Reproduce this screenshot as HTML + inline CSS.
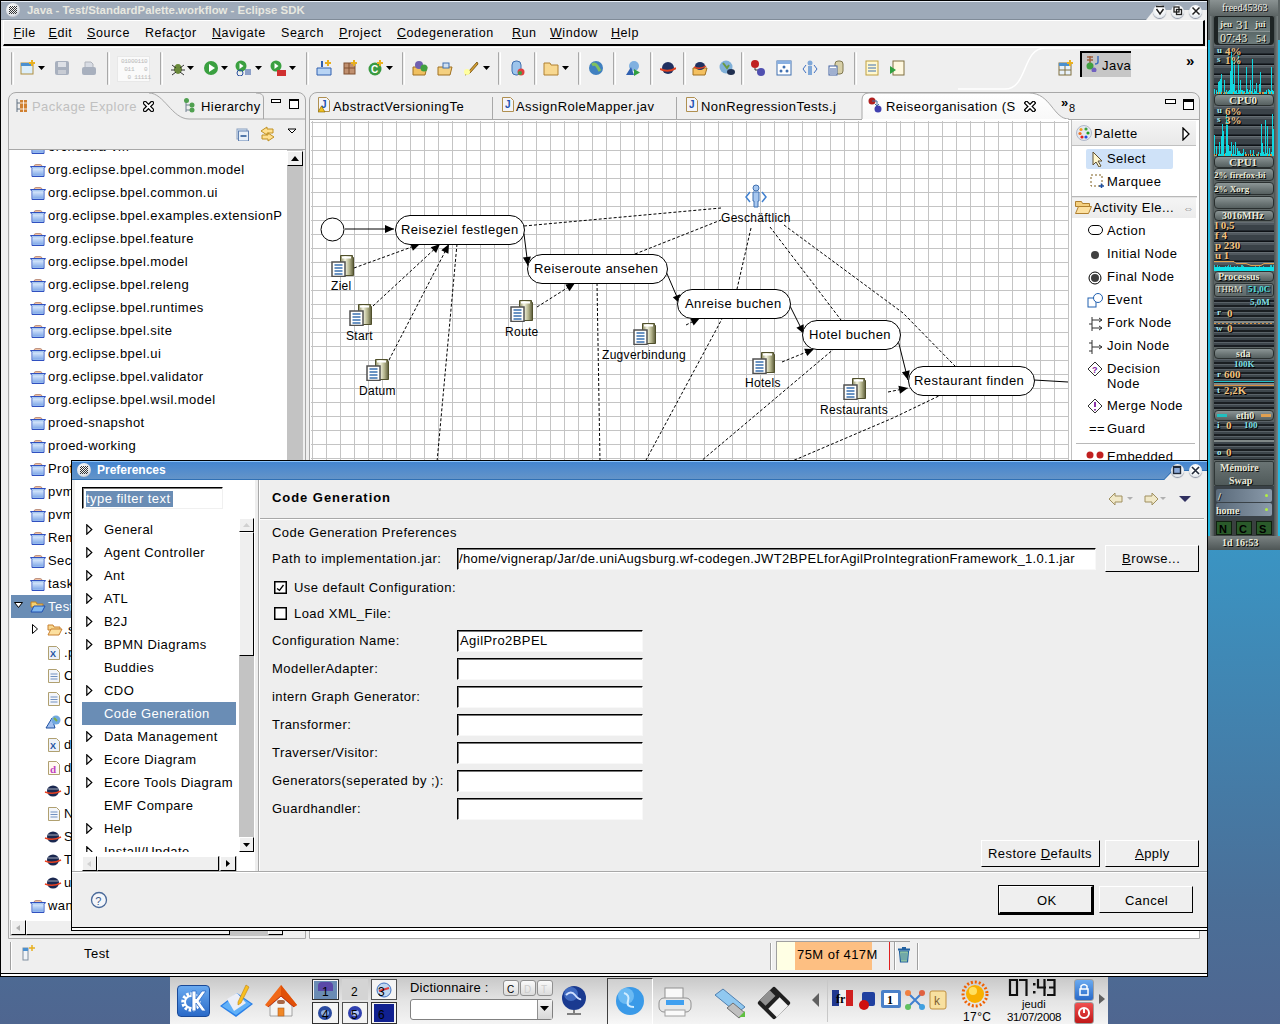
<!DOCTYPE html>
<html><head><meta charset="utf-8"><style>
html,body{margin:0;padding:0;width:1280px;height:1024px;overflow:hidden;position:relative;font-family:'Liberation Sans',sans-serif}
.r{position:absolute;box-sizing:border-box}
.t{position:absolute;white-space:pre}
</style></head><body>
<div class="r" style="left:0px;top:0px;width:1280px;height:1024px;background:linear-gradient(#3a9ad0 0px,#3a95c4 540px,#4a6f98 900px,#4f6690 1024px)"></div>
<div class="r" style="left:0px;top:0px;width:1208px;height:977px;background:#000"></div>
<div class="r" style="left:1px;top:1px;width:1206px;height:975px;background:#efefef"></div>
<div class="r" style="left:1px;top:1px;width:1206px;height:19px;background:#9eaab9;border-bottom:1px solid #808b98"></div>
<div class="r" style="left:1px;top:1px;width:1206px;height:1px;background:#e8eff8"></div>
<div class="r" style="left:1146px;top:10px;width:61px;height:10px;background:#efefef;clip-path:polygon(0 10px,61px 10px,61px 0,8px 0)"></div>
<div class="r" style="left:1153.0px;top:4.5px;width:13px;height:13px;border-radius:50%;background:radial-gradient(circle at 50% 40%,#fff 30%,#e8ecf0 65%,#b8c0cc);box-shadow:0 1px 1px #8890a0"></div>
<div class="r" style="left:1171.0px;top:4.5px;width:13px;height:13px;border-radius:50%;background:radial-gradient(circle at 50% 40%,#fff 30%,#e8ecf0 65%,#b8c0cc);box-shadow:0 1px 1px #8890a0"></div>
<div class="r" style="left:1189.0px;top:4.5px;width:13px;height:13px;border-radius:50%;background:radial-gradient(circle at 50% 40%,#fff 30%,#e8ecf0 65%,#b8c0cc);box-shadow:0 1px 1px #8890a0"></div>
<svg class="r" style="left:1154px;top:5px" width="12" height="12" viewBox="0 0 12 12"><path d="M2 1.5h8M2.5 4l3.5 5 3.5-5" stroke="#202020" stroke-width="1.5" fill="none"/></svg>
<svg class="r" style="left:1172px;top:5px" width="12" height="12" viewBox="0 0 12 12"><rect x="2" y="2" width="5" height="5" fill="none" stroke="#202020" stroke-width="1.3"/><rect x="4.5" y="4.5" width="5" height="5" fill="none" stroke="#202020" stroke-width="1.3"/></svg>
<svg class="r" style="left:1190px;top:5px" width="12" height="12" viewBox="0 0 12 12"><path d="M2.5 2.5l7 7M9.5 2.5l-7 7" stroke="#202020" stroke-width="1.5"/></svg>
<div class="r" style="left:6px;top:3px;width:14px;height:14px;border-radius:50%;background:radial-gradient(circle at 40% 35%,#fff,#dde1e6 60%,#99a);"></div>
<div class="r" style="left:9px;top:6px;width:8px;height:8px;background:repeating-conic-gradient(#333 0 25%,transparent 0 50%) 0 0/2px 2px"></div>
<div class="t" style="left:27px;top:2.55px;font-size:11.4px;line-height:14px;letter-spacing:0px;color:#e8e8e0;font-weight:bold;font-family:'Liberation Sans',sans-serif;">Java - Test/StandardPalette.workflow - Eclipse SDK</div>
<div class="r" style="left:3px;top:20px;width:1202px;height:26px;background:#efefef;border-top:1px solid #fff;border-left:1px solid #fff;border-bottom:2px solid #000;border-right:2px solid #000"></div>
<div class="t" style="left:13.5px;top:26.17px;font-size:12.5px;line-height:15px;letter-spacing:0.55px;color:#000;font-weight:normal;font-family:'Liberation Sans',sans-serif;"><u>F</u>ile</div>
<div class="t" style="left:48.5px;top:26.17px;font-size:12.5px;line-height:15px;letter-spacing:0.55px;color:#000;font-weight:normal;font-family:'Liberation Sans',sans-serif;"><u>E</u>dit</div>
<div class="t" style="left:87px;top:26.17px;font-size:12.5px;line-height:15px;letter-spacing:0.55px;color:#000;font-weight:normal;font-family:'Liberation Sans',sans-serif;"><u>S</u>ource</div>
<div class="t" style="left:145px;top:26.17px;font-size:12.5px;line-height:15px;letter-spacing:0.55px;color:#000;font-weight:normal;font-family:'Liberation Sans',sans-serif;">Refac<u>t</u>or</div>
<div class="t" style="left:212px;top:26.17px;font-size:12.5px;line-height:15px;letter-spacing:0.55px;color:#000;font-weight:normal;font-family:'Liberation Sans',sans-serif;"><u>N</u>avigate</div>
<div class="t" style="left:281px;top:26.17px;font-size:12.5px;line-height:15px;letter-spacing:0.55px;color:#000;font-weight:normal;font-family:'Liberation Sans',sans-serif;">Se<u>a</u>rch</div>
<div class="t" style="left:339px;top:26.17px;font-size:12.5px;line-height:15px;letter-spacing:0.55px;color:#000;font-weight:normal;font-family:'Liberation Sans',sans-serif;"><u>P</u>roject</div>
<div class="t" style="left:397px;top:26.17px;font-size:12.5px;line-height:15px;letter-spacing:0.55px;color:#000;font-weight:normal;font-family:'Liberation Sans',sans-serif;"><u>C</u>odegeneration</div>
<div class="t" style="left:512px;top:26.17px;font-size:12.5px;line-height:15px;letter-spacing:0.55px;color:#000;font-weight:normal;font-family:'Liberation Sans',sans-serif;"><u>R</u>un</div>
<div class="t" style="left:550px;top:26.17px;font-size:12.5px;line-height:15px;letter-spacing:0.55px;color:#000;font-weight:normal;font-family:'Liberation Sans',sans-serif;"><u>W</u>indow</div>
<div class="t" style="left:611px;top:26.17px;font-size:12.5px;line-height:15px;letter-spacing:0.55px;color:#000;font-weight:normal;font-family:'Liberation Sans',sans-serif;"><u>H</u>elp</div>
<div class="r" style="left:1px;top:47px;width:1206px;height:1px;background:#fff"></div>
<div class="r" style="left:11px;top:52px;width:3px;height:33px;border-left:1.5px solid #a8a8a8;border-right:1.5px solid #fff;border-radius:1px"></div>
<div class="r" style="left:107px;top:52px;width:3px;height:33px;border-left:1.5px solid #a8a8a8;border-right:1.5px solid #fff;border-radius:1px"></div>
<div class="r" style="left:160px;top:52px;width:3px;height:33px;border-left:1.5px solid #a8a8a8;border-right:1.5px solid #fff;border-radius:1px"></div>
<div class="r" style="left:306px;top:52px;width:3px;height:33px;border-left:1.5px solid #a8a8a8;border-right:1.5px solid #fff;border-radius:1px"></div>
<div class="r" style="left:402px;top:52px;width:3px;height:33px;border-left:1.5px solid #a8a8a8;border-right:1.5px solid #fff;border-radius:1px"></div>
<div class="r" style="left:498px;top:52px;width:3px;height:33px;border-left:1.5px solid #a8a8a8;border-right:1.5px solid #fff;border-radius:1px"></div>
<div class="r" style="left:534px;top:52px;width:3px;height:33px;border-left:1.5px solid #a8a8a8;border-right:1.5px solid #fff;border-radius:1px"></div>
<div class="r" style="left:578px;top:52px;width:3px;height:33px;border-left:1.5px solid #a8a8a8;border-right:1.5px solid #fff;border-radius:1px"></div>
<div class="r" style="left:613px;top:52px;width:3px;height:33px;border-left:1.5px solid #a8a8a8;border-right:1.5px solid #fff;border-radius:1px"></div>
<div class="r" style="left:650px;top:52px;width:3px;height:33px;border-left:1.5px solid #a8a8a8;border-right:1.5px solid #fff;border-radius:1px"></div>
<div class="r" style="left:683px;top:52px;width:3px;height:33px;border-left:1.5px solid #a8a8a8;border-right:1.5px solid #fff;border-radius:1px"></div>
<div class="r" style="left:741px;top:52px;width:3px;height:33px;border-left:1.5px solid #a8a8a8;border-right:1.5px solid #fff;border-radius:1px"></div>
<div class="r" style="left:854px;top:52px;width:3px;height:33px;border-left:1.5px solid #a8a8a8;border-right:1.5px solid #fff;border-radius:1px"></div>
<svg class="r" style="left:20px;top:60px" width="16" height="16" viewBox="0 0 16 16"><rect x="1" y="3" width="12" height="11" fill="#dceefa" stroke="#b09040"/><rect x="1" y="3" width="12" height="3" fill="#4a90d0"/><path d="M12 0v6M9 3h6" stroke="#e8b020" stroke-width="2"/></svg>
<svg class="r" style="left:38px;top:66px" width="7" height="4" viewBox="0 0 7 4"><path d="M0 0H7L3.5 4Z" fill="#000"/></svg>
<svg class="r" style="left:54px;top:60px" width="16" height="16" viewBox="0 0 16 16"><rect x="1" y="1" width="14" height="14" rx="2" fill="#a8b0be"/><rect x="4" y="2" width="8" height="5" fill="#dde0e6"/><rect x="4" y="10" width="8" height="4" fill="#c8ccd4"/></svg>
<svg class="r" style="left:81px;top:60px" width="16" height="16" viewBox="0 0 16 16"><rect x="1" y="7" width="14" height="8" rx="2" fill="#a8b0be"/><path d="M4 7V2h6l2 2v3" fill="#d8dce4" stroke="#b0b4bc"/></svg>
<div class="r" style="left:117px;top:56px;width:33px;height:26px;background:#fafafa;border:1px solid #e8e8e8"></div>
<div class="t" style="left:121px;top:58px;font:6px/8px 'Liberation Mono',monospace;color:#b8b8b8;letter-spacing:-.3px">01000110
 011   0
  0 11111</div>
<svg class="r" style="left:170px;top:60px" width="16" height="16" viewBox="0 0 16 16"><ellipse cx="8" cy="9" rx="4" ry="5" fill="#6a8a3a"/><path d="M2 5l4 3M14 5l-4 3M1 10h4M15 10h-4M2 15l4-3M14 15l-4-3" stroke="#333"/></svg>
<svg class="r" style="left:187px;top:66px" width="7" height="4" viewBox="0 0 7 4"><path d="M0 0H7L3.5 4Z" fill="#000"/></svg>
<svg class="r" style="left:203px;top:60px" width="16" height="16" viewBox="0 0 16 16"><circle cx="8" cy="8" r="7" fill="#3aa040"/><path d="M6 4v8l6-4z" fill="#fff"/></svg>
<svg class="r" style="left:221px;top:66px" width="7" height="4" viewBox="0 0 7 4"><path d="M0 0H7L3.5 4Z" fill="#000"/></svg>
<svg class="r" style="left:235px;top:60px" width="16" height="16" viewBox="0 0 16 16"><circle cx="6" cy="6" r="5.5" fill="#3aa040"/><path d="M4.5 3v6l4-3z" fill="#fff"/><circle cx="5" cy="13" r="3" fill="none" stroke="#2a50a0"/><path d="M10 10h6M10 12h6M10 14h6" stroke="#2a50a0"/></svg>
<svg class="r" style="left:255px;top:66px" width="7" height="4" viewBox="0 0 7 4"><path d="M0 0H7L3.5 4Z" fill="#000"/></svg>
<svg class="r" style="left:270px;top:60px" width="16" height="16" viewBox="0 0 16 16"><circle cx="6" cy="6" r="5.5" fill="#3aa040"/><path d="M4.5 3v6l4-3z" fill="#fff"/><rect x="7" y="10" width="9" height="6" fill="#d03030"/></svg>
<svg class="r" style="left:289px;top:66px" width="7" height="4" viewBox="0 0 7 4"><path d="M0 0H7L3.5 4Z" fill="#000"/></svg>
<svg class="r" style="left:316px;top:60px" width="16" height="16" viewBox="0 0 16 16"><path d="M1 8h14v7H1z" fill="#b8d4f4" stroke="#3060b0"/><path d="M6 1v6" stroke="#3060b0" stroke-width="2"/><path d="M12 0v6M9 3h6" stroke="#e8b020" stroke-width="2"/></svg>
<svg class="r" style="left:342px;top:60px" width="16" height="16" viewBox="0 0 16 16"><rect x="2" y="3" width="11" height="11" fill="#c09070" stroke="#805030"/><path d="M7 3v11M2 8h11" stroke="#805030"/><path d="M12 0v6M9 3h6" stroke="#e8b020" stroke-width="2"/></svg>
<svg class="r" style="left:368px;top:60px" width="16" height="16" viewBox="0 0 16 16"><circle cx="7" cy="9" r="6.5" fill="#3a9a40"/><text x="3" y="13" font-size="10" font-weight="bold" fill="#fff" font-family="Liberation Sans">C</text><path d="M12 0v6M9 3h6" stroke="#e8b020" stroke-width="2"/></svg>
<svg class="r" style="left:386px;top:66px" width="7" height="4" viewBox="0 0 7 4"><path d="M0 0H7L3.5 4Z" fill="#000"/></svg>
<svg class="r" style="left:412px;top:60px" width="16" height="16" viewBox="0 0 16 16"><path d="M1 7h14l-2 8H1z" fill="#f0c060" stroke="#a07020"/><circle cx="7" cy="5" r="4" fill="#7060b0"/><circle cx="12" cy="8" r="3.5" fill="#40a040"/></svg>
<svg class="r" style="left:437px;top:60px" width="16" height="16" viewBox="0 0 16 16"><path d="M1 7h14l-2 8H1z" fill="#f4d080" stroke="#a07020"/><rect x="6" y="3" width="6" height="5" fill="#d0e0f0" stroke="#4070b0"/></svg>
<svg class="r" style="left:463px;top:60px" width="16" height="16" viewBox="0 0 16 16"><path d="M2 15l4-4 8-9 1 2-8 9z" fill="#d8a030" stroke="#806020"/><circle cx="4" cy="12" r="3" fill="#ffffa0"/></svg>
<svg class="r" style="left:483px;top:66px" width="7" height="4" viewBox="0 0 7 4"><path d="M0 0H7L3.5 4Z" fill="#000"/></svg>
<svg class="r" style="left:509px;top:60px" width="16" height="16" viewBox="0 0 16 16"><rect x="3" y="1" width="9" height="14" rx="4" fill="#9cc4ec" stroke="#4070b0"/><circle cx="12" cy="12" r="3.5" fill="#e04040"/><circle cx="11" cy="13" r="2" fill="#40a040"/></svg>
<svg class="r" style="left:543px;top:60px" width="16" height="16" viewBox="0 0 16 16"><path d="M1 3h6l1 2h7v10H1z" fill="#f8d890" stroke="#b08030"/></svg>
<svg class="r" style="left:562px;top:66px" width="7" height="4" viewBox="0 0 7 4"><path d="M0 0H7L3.5 4Z" fill="#000"/></svg>
<svg class="r" style="left:588px;top:60px" width="16" height="16" viewBox="0 0 16 16"><circle cx="8" cy="8" r="7" fill="#4080c0"/><path d="M4 5q3-2 5 1t3 5" stroke="#80c060" stroke-width="3" fill="none"/></svg>
<svg class="r" style="left:625px;top:60px" width="16" height="16" viewBox="0 0 16 16"><circle cx="9" cy="6" r="5" fill="#80b0e0"/><path d="M1 15l5-8 3 8z" fill="#3060b0"/><path d="M9 9v7l6-3.5z" fill="#30a040"/></svg>
<svg class="r" style="left:660px;top:60px" width="16" height="16" viewBox="0 0 16 16"><ellipse cx="8" cy="8" rx="6" ry="6" fill="#203060"/><path d="M0 9q8 4 16-1" stroke="#e04020" stroke-width="2" fill="none"/></svg>
<svg class="r" style="left:692px;top:60px" width="16" height="16" viewBox="0 0 16 16"><path d="M1 8h14l-2 7H1z" fill="#f4c060" stroke="#a07020"/><ellipse cx="8" cy="6" rx="5" ry="4" fill="#203060"/><path d="M2 7q6 3 12-1" stroke="#e04020" stroke-width="1.5" fill="none"/></svg>
<svg class="r" style="left:719px;top:60px" width="16" height="16" viewBox="0 0 16 16"><circle cx="7" cy="7" r="6.5" fill="#80b0d8"/><path d="M4 3l4 5 2-3" stroke="#6a9a40" stroke-width="2" fill="none"/><ellipse cx="12" cy="12" rx="4" ry="3" fill="#203050"/></svg>
<svg class="r" style="left:750px;top:60px" width="16" height="16" viewBox="0 0 16 16"><circle cx="5" cy="4" r="4" fill="#c02020"/><path d="M5 8v2h6v2" stroke="#333" fill="none"/><circle cx="11" cy="12" r="4" fill="#5050b0"/></svg>
<svg class="r" style="left:776px;top:60px" width="16" height="16" viewBox="0 0 16 16"><rect x="1" y="1" width="14" height="14" fill="#fff" stroke="#4070b0"/><rect x="1" y="1" width="14" height="3" fill="#8ab0e0"/><circle cx="5" cy="11" r="1.5" fill="#4070b0"/><circle cx="11" cy="11" r="1.5" fill="#4070b0"/><circle cx="8" cy="7" r="1.5" fill="#4070b0"/></svg>
<svg class="r" style="left:802px;top:60px" width="16" height="16" viewBox="0 0 16 16"><circle cx="8" cy="3" r="2.5" fill="#80a8d8"/><rect x="6" y="6" width="4" height="9" fill="#80a8d8"/><path d="M4 5l-3 4 3 4M12 5l3 4-3 4" stroke="#4070c0" fill="none"/></svg>
<svg class="r" style="left:828px;top:60px" width="16" height="16" viewBox="0 0 16 16"><rect x="7" y="1" width="8" height="13" rx="3" fill="#d8d0a8" stroke="#807850"/><rect x="1" y="6" width="8" height="9" fill="#fff" stroke="#4060a0"/><path d="M2 9h6M2 11h6M2 13h6" stroke="#4060a0"/></svg>
<svg class="r" style="left:864px;top:60px" width="16" height="16" viewBox="0 0 16 16"><rect x="2" y="1" width="12" height="14" fill="#fff8d0" stroke="#c0a040"/><path d="M4 5h8M4 8h8M4 11h8" stroke="#4070b0"/></svg>
<svg class="r" style="left:889px;top:60px" width="16" height="16" viewBox="0 0 16 16"><rect x="4" y="1" width="11" height="14" fill="#fff8e0" stroke="#807040"/><path d="M1 6v8l6-4z" fill="#30a040"/></svg>
<div class="r" style="left:1020px;top:48px;width:187px;height:44px;background:#efefef"></div>
<svg class="r" style="left:900px;top:40px" width="307" height="54"><path d="M58 49 H105 C128 49 122 8 145 8 H307" stroke="#fff" stroke-width="1.5" fill="none"/></svg>
<svg class="r" style="left:1058px;top:60px" width="16" height="16" viewBox="0 0 16 16"><rect x="1" y="3" width="12" height="12" fill="#e8f2fc" stroke="#807040"/><rect x="1" y="3" width="12" height="3" fill="#4a90d0"/><path d="M7 6v9M1 10h12" stroke="#807040"/><path d="M12 0v6M9 3h6" stroke="#e8b020" stroke-width="2"/></svg>
<div class="r" style="left:1080px;top:51px;width:51px;height:26px;background:#c6c6c6;border-top:2px solid #000;border-left:2px solid #000"></div>
<svg class="r" style="left:1085px;top:56px" width="16" height="16" viewBox="0 0 16 16"><path d="M2 1h6M5 0v7M2 4h6" stroke="#a06040" stroke-width="1.5"/><circle cx="5" cy="10" r="3.5" fill="#40a040"/><circle cx="9" cy="14" r="2.5" fill="#7060c0"/><path d="M13 0v6q0 2-3 2" stroke="#4070c0" stroke-width="1.5" fill="none"/></svg>
<div class="t" style="left:1102px;top:57.50px;font-size:13px;line-height:16px;letter-spacing:0.45px;color:#000;font-weight:normal;font-family:'Liberation Sans',sans-serif;">Java</div>
<div class="t" style="left:1186px;top:51.80px;font-size:15px;line-height:18px;letter-spacing:0px;color:#000;font-weight:bold;font-family:'Liberation Sans',sans-serif;">»</div>
<div class="r" style="left:1px;top:973px;width:1206px;height:1px;background:#000"></div>
<div class="r" style="left:1px;top:974px;width:1206px;height:2px;background:#fff"></div>
<div class="r" style="left:1px;top:976px;width:1206px;height:1px;background:#000"></div>
<div class="r" style="left:10px;top:942px;width:2px;height:28px;border-left:1px solid #a0a0a0;border-right:1px solid #fff"></div>
<svg class="r" style="left:20px;top:945px" width="16" height="16" viewBox="0 0 16 16"><rect x="3" y="3" width="5" height="12" fill="#f0f4f8" stroke="#8090a0"/><rect x="3" y="3" width="5" height="3" fill="#4a90d0"/><path d="M12 0v6M9 3h6" stroke="#e8b020" stroke-width="1.5"/></svg>
<div class="t" style="left:84px;top:945.50px;font-size:13px;line-height:16px;letter-spacing:0.45px;color:#000;font-weight:normal;font-family:'Liberation Sans',sans-serif;">Test</div>
<div class="r" style="left:776px;top:941px;width:134px;height:29px;background:#eee;border-top:1px solid #a0a0a0;border-left:1px solid #a0a0a0"></div>
<div class="r" style="left:777px;top:942px;width:18px;height:28px;background:#ffffe4"></div>
<div class="r" style="left:795px;top:942px;width:77px;height:28px;background:#fdbf82"></div>
<div class="r" style="left:889px;top:942px;width:1px;height:28px;background:#e02020"></div>
<div class="r" style="left:894px;top:942px;width:2px;height:28px;border-left:1px solid #a0a0a0;border-right:1px solid #fff"></div>
<div class="t" style="left:797px;top:946.50px;font-size:13px;line-height:16px;letter-spacing:0.45px;color:#000;font-weight:normal;font-family:'Liberation Sans',sans-serif;">75M of 417M</div>
<svg class="r" style="left:897px;top:946px" width="14" height="17" viewBox="0 0 14 17"><path d="M1 3.5h12" stroke="#2060a0" stroke-width="2"/><rect x="5" y="1" width="4" height="2" fill="#2060a0"/><path d="M2.5 5h9l-1 11h-7z" fill="#a8d8a0" stroke="#2060a0" stroke-width="1.2"/><path d="M5 6.5v8M7 6.5v8M9 6.5v8" stroke="#3a78b0" stroke-width="1"/></svg>
<div class="r" style="left:917px;top:943px;width:2px;height:27px;border-left:1px solid #a0a0a0;border-right:1px solid #fff"></div>
<div class="r" style="left:770px;top:943px;width:2px;height:27px;border-left:1px solid #a0a0a0;border-right:1px solid #fff"></div>
<div class="r" style="left:8px;top:92px;width:298px;height:847px;border:1px solid #a8a8a8;border-radius:8px 8px 0 0;background:#efefef"></div>
<svg class="r" style="left:8px;top:92px" width="298" height="58" viewBox="0 0 298 58"><path d="M141 1 C156 1 164 27 181 27 H297" stroke="#a8a8a8" fill="none"/><path d="M186 27 L255 27 Q263 27 263 35" fill="none"/><path d="M255.5 27 V6 Q255.5 1 248 1" stroke="#a8a8a8" fill="none"/></svg>
<div class="r" style="left:9px;top:149px;width:296px;height:1px;background:#a8a8a8"></div>
<svg class="r" style="left:16px;top:99px" width="12" height="13" viewBox="0 0 12 13"><path d="M1 0v13M1 4h3M1 10h3" stroke="#607080"/><rect x="4" y="1" width="7" height="6" fill="#d08030"/><rect x="4" y="7" width="7" height="6" fill="#d08030"/><path d="M7.5 1v12M4 4h7M4 10h7" stroke="#fff" stroke-width=".8"/></svg>
<div class="t" style="left:32px;top:98.50px;font-size:13px;line-height:16px;letter-spacing:0.45px;color:#c0c0c0;font-weight:normal;font-family:'Liberation Sans',sans-serif;">Package Explore</div>
<svg class="r" style="left:143px;top:101px" width="11" height="11" viewBox="0 0 11 11"><path d="M2 2l7 7M9 2l-7 7" stroke="#000" stroke-width="4.4" stroke-linecap="square"/><path d="M2 2l7 7M9 2l-7 7" stroke="#fff" stroke-width="1.8" stroke-linecap="square"/></svg>
<svg class="r" style="left:184px;top:98px" width="12" height="15" viewBox="0 0 12 15"><path d="M2 3v11M2 7h5M2 12h5" stroke="#708090"/><circle cx="2.5" cy="2.5" r="2.5" fill="#50a050"/><circle cx="8" cy="7" r="2.5" fill="#50a050"/><circle cx="8" cy="12" r="2.5" fill="#50a050"/></svg>
<div class="t" style="left:201px;top:98.50px;font-size:13px;line-height:16px;letter-spacing:0.45px;color:#000;font-weight:normal;font-family:'Liberation Sans',sans-serif;">Hierarchy</div>
<div class="r" style="left:271px;top:99px;width:10px;height:4px;border:1px solid #000;background:#fff"></div>
<div class="r" style="left:289px;top:99px;width:10px;height:10px;border:1px solid #000;border-top-width:2px;background:#fff"></div>
<svg class="r" style="left:236px;top:128px" width="13" height="13" viewBox="0 0 13 13"><rect x="1" y="1" width="10" height="10" fill="#e0ecf8" stroke="#8aa0c0"/><rect x="2.5" y="3" width="10" height="10" fill="#e8f0f8" stroke="#6080b0"/><path d="M4.5 8h6" stroke="#205090" stroke-width="1.5"/></svg>
<svg class="r" style="left:259px;top:126px" width="17" height="16" viewBox="0 0 17 16"><path d="M8 1L2 5l6 4V7h6V3H8z" fill="#ffe090" stroke="#c09020"/><path d="M9 15l6-4-6-4v2H3v4h6z" fill="#ffe090" stroke="#c09020"/></svg>
<svg class="r" style="left:287px;top:128px" width="10" height="6" viewBox="0 0 10 6"><path d="M1 1h8L5 5z" fill="#fff" stroke="#000"/></svg>
<div class="r" style="left:10px;top:150px;width:277px;height:770px;background:#fff"></div>
<div class="r" style="left:287px;top:150px;width:16px;height:770px;background:#c3c3c3"></div>
<div class="r" style="left:287px;top:151px;width:16px;height:15px;background:#efefef;border-top:1px solid #fff;border-left:1px solid #fff;border-right:1px solid #000;border-bottom:1px solid #000;box-sizing:border-box;"></div>
<svg class="r" style="left:290px;top:155px" width="10" height="7" viewBox="0 0 10 7"><path d="M1 6h8L5 1z" fill="#000"/></svg>
<div class="r" style="left:10px;top:920px;width:277px;height:16px;background:#c3c3c3"></div>
<div class="r" style="left:11px;top:920px;width:15px;height:15px;background:#efefef;border-top:1px solid #fff;border-left:1px solid #fff;border-right:1px solid #000;border-bottom:1px solid #000;box-sizing:border-box;"></div>
<div class="r" style="left:26px;top:920px;width:204px;height:15px;background:#efefef;border-top:1px solid #fff;border-left:1px solid #fff;border-right:1px solid #000;border-bottom:1px solid #000;box-sizing:border-box;"></div>
<div class="r" style="left:268px;top:920px;width:15px;height:15px;background:#efefef;border-top:1px solid #fff;border-left:1px solid #fff;border-right:1px solid #000;border-bottom:1px solid #000;box-sizing:border-box;"></div>
<svg class="r" style="left:14px;top:924px" width="8" height="8" viewBox="0 0 8 8"><path d="M6 1v6L2 4z" fill="#b0b0b0"/></svg>
<div class="r" style="left:283px;top:920px;width:20px;height:18px;background:#efefef"></div>
<svg width="0" height="0" style="position:absolute"><defs><linearGradient id="fg" x1="0" y1="0" x2="0" y2="1"><stop offset="0" stop-color="#d8e8fc"/><stop offset="1" stop-color="#80a8e8"/></linearGradient></defs></svg>
<div class="r" style="left:10px;top:150px;width:277px;height:770px;overflow:hidden">
<svg class="r" style="left:20px;top:-9px" width="16" height="13" viewBox="0 0 16 13"><path d="M4 2.5q0-2 2-2h4q2 0 2 2" fill="#f0c0a0" stroke="#b08070" stroke-width=".8"/><path d="M0.5 2.5h15l-1.5 2v8h-12v-8z" fill="#a8c8f0" stroke="#3050c0"/><path d="M2.5 4.5h11v7h-11z" fill="url(#fg)"/></svg>
<div class="t" style="left:38px;top:-11.50px;font-size:13px;line-height:16px;letter-spacing:0.45px;color:#000;font-weight:normal;font-family:'Liberation Sans',sans-serif;">orchestra-vm</div>
<svg class="r" style="left:20px;top:14px" width="16" height="13" viewBox="0 0 16 13"><path d="M4 2.5q0-2 2-2h4q2 0 2 2" fill="#f0c0a0" stroke="#b08070" stroke-width=".8"/><path d="M0.5 2.5h15l-1.5 2v8h-12v-8z" fill="#a8c8f0" stroke="#3050c0"/><path d="M2.5 4.5h11v7h-11z" fill="url(#fg)"/></svg>
<div class="t" style="left:38px;top:11.50px;font-size:13px;line-height:16px;letter-spacing:0.45px;color:#000;font-weight:normal;font-family:'Liberation Sans',sans-serif;">org.eclipse.bpel.common.model</div>
<svg class="r" style="left:20px;top:37px" width="16" height="13" viewBox="0 0 16 13"><path d="M4 2.5q0-2 2-2h4q2 0 2 2" fill="#f0c0a0" stroke="#b08070" stroke-width=".8"/><path d="M0.5 2.5h15l-1.5 2v8h-12v-8z" fill="#a8c8f0" stroke="#3050c0"/><path d="M2.5 4.5h11v7h-11z" fill="url(#fg)"/></svg>
<div class="t" style="left:38px;top:34.50px;font-size:13px;line-height:16px;letter-spacing:0.45px;color:#000;font-weight:normal;font-family:'Liberation Sans',sans-serif;">org.eclipse.bpel.common.ui</div>
<svg class="r" style="left:20px;top:60px" width="16" height="13" viewBox="0 0 16 13"><path d="M4 2.5q0-2 2-2h4q2 0 2 2" fill="#f0c0a0" stroke="#b08070" stroke-width=".8"/><path d="M0.5 2.5h15l-1.5 2v8h-12v-8z" fill="#a8c8f0" stroke="#3050c0"/><path d="M2.5 4.5h11v7h-11z" fill="url(#fg)"/></svg>
<div class="t" style="left:38px;top:57.50px;font-size:13px;line-height:16px;letter-spacing:0.45px;color:#000;font-weight:normal;font-family:'Liberation Sans',sans-serif;">org.eclipse.bpel.examples.extensionP</div>
<svg class="r" style="left:20px;top:83px" width="16" height="13" viewBox="0 0 16 13"><path d="M4 2.5q0-2 2-2h4q2 0 2 2" fill="#f0c0a0" stroke="#b08070" stroke-width=".8"/><path d="M0.5 2.5h15l-1.5 2v8h-12v-8z" fill="#a8c8f0" stroke="#3050c0"/><path d="M2.5 4.5h11v7h-11z" fill="url(#fg)"/></svg>
<div class="t" style="left:38px;top:80.50px;font-size:13px;line-height:16px;letter-spacing:0.45px;color:#000;font-weight:normal;font-family:'Liberation Sans',sans-serif;">org.eclipse.bpel.feature</div>
<svg class="r" style="left:20px;top:106px" width="16" height="13" viewBox="0 0 16 13"><path d="M4 2.5q0-2 2-2h4q2 0 2 2" fill="#f0c0a0" stroke="#b08070" stroke-width=".8"/><path d="M0.5 2.5h15l-1.5 2v8h-12v-8z" fill="#a8c8f0" stroke="#3050c0"/><path d="M2.5 4.5h11v7h-11z" fill="url(#fg)"/></svg>
<div class="t" style="left:38px;top:103.50px;font-size:13px;line-height:16px;letter-spacing:0.45px;color:#000;font-weight:normal;font-family:'Liberation Sans',sans-serif;">org.eclipse.bpel.model</div>
<svg class="r" style="left:20px;top:129px" width="16" height="13" viewBox="0 0 16 13"><path d="M4 2.5q0-2 2-2h4q2 0 2 2" fill="#f0c0a0" stroke="#b08070" stroke-width=".8"/><path d="M0.5 2.5h15l-1.5 2v8h-12v-8z" fill="#a8c8f0" stroke="#3050c0"/><path d="M2.5 4.5h11v7h-11z" fill="url(#fg)"/></svg>
<div class="t" style="left:38px;top:126.50px;font-size:13px;line-height:16px;letter-spacing:0.45px;color:#000;font-weight:normal;font-family:'Liberation Sans',sans-serif;">org.eclipse.bpel.releng</div>
<svg class="r" style="left:20px;top:152px" width="16" height="13" viewBox="0 0 16 13"><path d="M4 2.5q0-2 2-2h4q2 0 2 2" fill="#f0c0a0" stroke="#b08070" stroke-width=".8"/><path d="M0.5 2.5h15l-1.5 2v8h-12v-8z" fill="#a8c8f0" stroke="#3050c0"/><path d="M2.5 4.5h11v7h-11z" fill="url(#fg)"/></svg>
<div class="t" style="left:38px;top:149.50px;font-size:13px;line-height:16px;letter-spacing:0.45px;color:#000;font-weight:normal;font-family:'Liberation Sans',sans-serif;">org.eclipse.bpel.runtimes</div>
<svg class="r" style="left:20px;top:175px" width="16" height="13" viewBox="0 0 16 13"><path d="M4 2.5q0-2 2-2h4q2 0 2 2" fill="#f0c0a0" stroke="#b08070" stroke-width=".8"/><path d="M0.5 2.5h15l-1.5 2v8h-12v-8z" fill="#a8c8f0" stroke="#3050c0"/><path d="M2.5 4.5h11v7h-11z" fill="url(#fg)"/></svg>
<div class="t" style="left:38px;top:172.50px;font-size:13px;line-height:16px;letter-spacing:0.45px;color:#000;font-weight:normal;font-family:'Liberation Sans',sans-serif;">org.eclipse.bpel.site</div>
<svg class="r" style="left:20px;top:198px" width="16" height="13" viewBox="0 0 16 13"><path d="M4 2.5q0-2 2-2h4q2 0 2 2" fill="#f0c0a0" stroke="#b08070" stroke-width=".8"/><path d="M0.5 2.5h15l-1.5 2v8h-12v-8z" fill="#a8c8f0" stroke="#3050c0"/><path d="M2.5 4.5h11v7h-11z" fill="url(#fg)"/></svg>
<div class="t" style="left:38px;top:195.50px;font-size:13px;line-height:16px;letter-spacing:0.45px;color:#000;font-weight:normal;font-family:'Liberation Sans',sans-serif;">org.eclipse.bpel.ui</div>
<svg class="r" style="left:20px;top:221px" width="16" height="13" viewBox="0 0 16 13"><path d="M4 2.5q0-2 2-2h4q2 0 2 2" fill="#f0c0a0" stroke="#b08070" stroke-width=".8"/><path d="M0.5 2.5h15l-1.5 2v8h-12v-8z" fill="#a8c8f0" stroke="#3050c0"/><path d="M2.5 4.5h11v7h-11z" fill="url(#fg)"/></svg>
<div class="t" style="left:38px;top:218.50px;font-size:13px;line-height:16px;letter-spacing:0.45px;color:#000;font-weight:normal;font-family:'Liberation Sans',sans-serif;">org.eclipse.bpel.validator</div>
<svg class="r" style="left:20px;top:244px" width="16" height="13" viewBox="0 0 16 13"><path d="M4 2.5q0-2 2-2h4q2 0 2 2" fill="#f0c0a0" stroke="#b08070" stroke-width=".8"/><path d="M0.5 2.5h15l-1.5 2v8h-12v-8z" fill="#a8c8f0" stroke="#3050c0"/><path d="M2.5 4.5h11v7h-11z" fill="url(#fg)"/></svg>
<div class="t" style="left:38px;top:241.50px;font-size:13px;line-height:16px;letter-spacing:0.45px;color:#000;font-weight:normal;font-family:'Liberation Sans',sans-serif;">org.eclipse.bpel.wsil.model</div>
<svg class="r" style="left:20px;top:267px" width="16" height="13" viewBox="0 0 16 13"><path d="M4 2.5q0-2 2-2h4q2 0 2 2" fill="#f0c0a0" stroke="#b08070" stroke-width=".8"/><path d="M0.5 2.5h15l-1.5 2v8h-12v-8z" fill="#a8c8f0" stroke="#3050c0"/><path d="M2.5 4.5h11v7h-11z" fill="url(#fg)"/></svg>
<div class="t" style="left:38px;top:264.50px;font-size:13px;line-height:16px;letter-spacing:0.45px;color:#000;font-weight:normal;font-family:'Liberation Sans',sans-serif;">proed-snapshot</div>
<svg class="r" style="left:20px;top:290px" width="16" height="13" viewBox="0 0 16 13"><path d="M4 2.5q0-2 2-2h4q2 0 2 2" fill="#f0c0a0" stroke="#b08070" stroke-width=".8"/><path d="M0.5 2.5h15l-1.5 2v8h-12v-8z" fill="#a8c8f0" stroke="#3050c0"/><path d="M2.5 4.5h11v7h-11z" fill="url(#fg)"/></svg>
<div class="t" style="left:38px;top:287.50px;font-size:13px;line-height:16px;letter-spacing:0.45px;color:#000;font-weight:normal;font-family:'Liberation Sans',sans-serif;">proed-working</div>
<svg class="r" style="left:20px;top:313px" width="16" height="13" viewBox="0 0 16 13"><path d="M4 2.5q0-2 2-2h4q2 0 2 2" fill="#f0c0a0" stroke="#b08070" stroke-width=".8"/><path d="M0.5 2.5h15l-1.5 2v8h-12v-8z" fill="#a8c8f0" stroke="#3050c0"/><path d="M2.5 4.5h11v7h-11z" fill="url(#fg)"/></svg>
<div class="t" style="left:38px;top:310.50px;font-size:13px;line-height:16px;letter-spacing:0.45px;color:#000;font-weight:normal;font-family:'Liberation Sans',sans-serif;">Prof</div>
<svg class="r" style="left:20px;top:336px" width="16" height="13" viewBox="0 0 16 13"><path d="M4 2.5q0-2 2-2h4q2 0 2 2" fill="#f0c0a0" stroke="#b08070" stroke-width=".8"/><path d="M0.5 2.5h15l-1.5 2v8h-12v-8z" fill="#a8c8f0" stroke="#3050c0"/><path d="M2.5 4.5h11v7h-11z" fill="url(#fg)"/></svg>
<div class="t" style="left:38px;top:333.50px;font-size:13px;line-height:16px;letter-spacing:0.45px;color:#000;font-weight:normal;font-family:'Liberation Sans',sans-serif;">pvm</div>
<svg class="r" style="left:20px;top:359px" width="16" height="13" viewBox="0 0 16 13"><path d="M4 2.5q0-2 2-2h4q2 0 2 2" fill="#f0c0a0" stroke="#b08070" stroke-width=".8"/><path d="M0.5 2.5h15l-1.5 2v8h-12v-8z" fill="#a8c8f0" stroke="#3050c0"/><path d="M2.5 4.5h11v7h-11z" fill="url(#fg)"/></svg>
<div class="t" style="left:38px;top:356.50px;font-size:13px;line-height:16px;letter-spacing:0.45px;color:#000;font-weight:normal;font-family:'Liberation Sans',sans-serif;">pvm</div>
<svg class="r" style="left:20px;top:382px" width="16" height="13" viewBox="0 0 16 13"><path d="M4 2.5q0-2 2-2h4q2 0 2 2" fill="#f0c0a0" stroke="#b08070" stroke-width=".8"/><path d="M0.5 2.5h15l-1.5 2v8h-12v-8z" fill="#a8c8f0" stroke="#3050c0"/><path d="M2.5 4.5h11v7h-11z" fill="url(#fg)"/></svg>
<div class="t" style="left:38px;top:379.50px;font-size:13px;line-height:16px;letter-spacing:0.45px;color:#000;font-weight:normal;font-family:'Liberation Sans',sans-serif;">Rem</div>
<svg class="r" style="left:20px;top:405px" width="16" height="13" viewBox="0 0 16 13"><path d="M4 2.5q0-2 2-2h4q2 0 2 2" fill="#f0c0a0" stroke="#b08070" stroke-width=".8"/><path d="M0.5 2.5h15l-1.5 2v8h-12v-8z" fill="#a8c8f0" stroke="#3050c0"/><path d="M2.5 4.5h11v7h-11z" fill="url(#fg)"/></svg>
<div class="t" style="left:38px;top:402.50px;font-size:13px;line-height:16px;letter-spacing:0.45px;color:#000;font-weight:normal;font-family:'Liberation Sans',sans-serif;">Sec</div>
<svg class="r" style="left:20px;top:428px" width="16" height="13" viewBox="0 0 16 13"><path d="M4 2.5q0-2 2-2h4q2 0 2 2" fill="#f0c0a0" stroke="#b08070" stroke-width=".8"/><path d="M0.5 2.5h15l-1.5 2v8h-12v-8z" fill="#a8c8f0" stroke="#3050c0"/><path d="M2.5 4.5h11v7h-11z" fill="url(#fg)"/></svg>
<div class="t" style="left:38px;top:425.50px;font-size:13px;line-height:16px;letter-spacing:0.45px;color:#000;font-weight:normal;font-family:'Liberation Sans',sans-serif;">task</div>
<div class="r" style="left:1px;top:445px;width:62px;height:23px;background:#6a8db5"></div>
<svg class="r" style="left:4px;top:452px" width="9" height="6" viewBox="0 0 9 6"><path d="M0.5 0.5h8L4.5 5.5z" fill="#fff" stroke="#000"/></svg>
<svg class="r" style="left:20px;top:450px" width="16" height="13" viewBox="0 0 16 13"><path d="M1 2h5l1 2h6v3H1z" fill="#f4d070" stroke="#c08020"/><path d="M1 12l3-6h11l-3 6z" fill="#80b8f0" stroke="#2050b0"/></svg>
<div class="t" style="left:38px;top:448.50px;font-size:13px;line-height:16px;letter-spacing:0.45px;color:#fff;font-weight:normal;font-family:'Liberation Sans',sans-serif;">Test</div>
<svg class="r" style="left:22px;top:474px" width="6" height="10" viewBox="0 0 6 10"><path d="M0.5 0.5v9l5-4.5z" fill="#fff" stroke="#000"/></svg>
<svg class="r" style="left:37px;top:474px" width="16" height="12" viewBox="0 0 16 12"><path d="M1 1h5l1 2h6v3H1z" fill="#f8d890" stroke="#c88030"/><path d="M1 11l3-6h11l-3 6z" fill="#fce0a0" stroke="#c88030"/></svg>
<div class="t" style="left:54px;top:471.50px;font-size:13px;line-height:16px;letter-spacing:0.45px;color:#000;font-weight:normal;font-family:'Liberation Sans',sans-serif;">.s</div>
<svg class="r" style="left:38px;top:496px" width="12" height="14" viewBox="0 0 12 14"><path d="M.5 .5h8l3 3v10H.5z" fill="#eef2f8" stroke="#b0a070"/><text x="2" y="11" font-size="9" font-weight="bold" fill="#2050a0" font-family="Liberation Sans">X</text></svg>
<div class="t" style="left:54px;top:494.50px;font-size:13px;line-height:16px;letter-spacing:0.45px;color:#000;font-weight:normal;font-family:'Liberation Sans',sans-serif;">.p</div>
<svg class="r" style="left:38px;top:519px" width="12" height="14" viewBox="0 0 12 14"><path d="M.5 .5h8l3 3v10H.5z" fill="#f4f6fa" stroke="#b0a070"/><path d="M2.5 5h7M2.5 7.5h7M2.5 10h7" stroke="#7090c0"/></svg>
<div class="t" style="left:54px;top:517.50px;font-size:13px;line-height:16px;letter-spacing:0.45px;color:#000;font-weight:normal;font-family:'Liberation Sans',sans-serif;">C</div>
<svg class="r" style="left:38px;top:542px" width="12" height="14" viewBox="0 0 12 14"><path d="M.5 .5h8l3 3v10H.5z" fill="#f4f6fa" stroke="#b0a070"/><path d="M2.5 5h7M2.5 7.5h7M2.5 10h7" stroke="#7090c0"/></svg>
<div class="t" style="left:54px;top:540.50px;font-size:13px;line-height:16px;letter-spacing:0.45px;color:#000;font-weight:normal;font-family:'Liberation Sans',sans-serif;">C</div>
<svg class="r" style="left:35px;top:565px" width="17" height="14" viewBox="0 0 17 14"><path d="M1 13l6-10 3 10z" fill="#a0c0f0" stroke="#2050a0"/><circle cx="11" cy="5" r="4.5" fill="#70a8e0"/><path d="M9 3l3 3" stroke="#80b040" stroke-width="2"/></svg>
<div class="t" style="left:54px;top:563.50px;font-size:13px;line-height:16px;letter-spacing:0.45px;color:#000;font-weight:normal;font-family:'Liberation Sans',sans-serif;">C</div>
<svg class="r" style="left:38px;top:588px" width="12" height="14" viewBox="0 0 12 14"><path d="M.5 .5h8l3 3v10H.5z" fill="#eef2f8" stroke="#b0a070"/><text x="2" y="11" font-size="9" font-weight="bold" fill="#2050a0" font-family="Liberation Sans">X</text></svg>
<div class="t" style="left:54px;top:586.50px;font-size:13px;line-height:16px;letter-spacing:0.45px;color:#000;font-weight:normal;font-family:'Liberation Sans',sans-serif;">d</div>
<svg class="r" style="left:38px;top:611px" width="12" height="14" viewBox="0 0 12 14"><path d="M.5 .5h8l3 3v10H.5z" fill="#fff8f0" stroke="#b0a070"/><text x="2" y="12" font-size="11" font-weight="bold" fill="#c040c0" font-family="Liberation Serif">d</text></svg>
<div class="t" style="left:54px;top:609.50px;font-size:13px;line-height:16px;letter-spacing:0.45px;color:#000;font-weight:normal;font-family:'Liberation Sans',sans-serif;">d</div>
<svg class="r" style="left:34px;top:635px" width="18" height="12" viewBox="0 0 18 12"><ellipse cx="9" cy="6" rx="6" ry="5.5" fill="#1a2850"/><path d="M1 7q8 3 16-1" stroke="#e84020" stroke-width="1.5" fill="none"/><path d="M4 4h10" stroke="#fff" stroke-width=".6"/></svg>
<div class="t" style="left:54px;top:632.50px;font-size:13px;line-height:16px;letter-spacing:0.45px;color:#000;font-weight:normal;font-family:'Liberation Sans',sans-serif;">JV</div>
<svg class="r" style="left:38px;top:657px" width="12" height="14" viewBox="0 0 12 14"><path d="M.5 .5h8l3 3v10H.5z" fill="#f4f6fa" stroke="#b0a070"/><path d="M2.5 5h7M2.5 7.5h7M2.5 10h7" stroke="#7090c0"/></svg>
<div class="t" style="left:54px;top:655.50px;font-size:13px;line-height:16px;letter-spacing:0.45px;color:#000;font-weight:normal;font-family:'Liberation Sans',sans-serif;">N</div>
<svg class="r" style="left:34px;top:681px" width="18" height="12" viewBox="0 0 18 12"><ellipse cx="9" cy="6" rx="6" ry="5.5" fill="#1a2850"/><path d="M1 7q8 3 16-1" stroke="#e84020" stroke-width="1.5" fill="none"/><path d="M4 4h10" stroke="#fff" stroke-width=".6"/></svg>
<div class="t" style="left:54px;top:678.50px;font-size:13px;line-height:16px;letter-spacing:0.45px;color:#000;font-weight:normal;font-family:'Liberation Sans',sans-serif;">S</div>
<svg class="r" style="left:34px;top:704px" width="18" height="12" viewBox="0 0 18 12"><ellipse cx="9" cy="6" rx="6" ry="5.5" fill="#1a2850"/><path d="M1 7q8 3 16-1" stroke="#e84020" stroke-width="1.5" fill="none"/><path d="M4 4h10" stroke="#fff" stroke-width=".6"/></svg>
<div class="t" style="left:54px;top:701.50px;font-size:13px;line-height:16px;letter-spacing:0.45px;color:#000;font-weight:normal;font-family:'Liberation Sans',sans-serif;">T</div>
<svg class="r" style="left:34px;top:727px" width="18" height="12" viewBox="0 0 18 12"><ellipse cx="9" cy="6" rx="6" ry="5.5" fill="#1a2850"/><path d="M1 7q8 3 16-1" stroke="#e84020" stroke-width="1.5" fill="none"/><path d="M4 4h10" stroke="#fff" stroke-width=".6"/></svg>
<div class="t" style="left:54px;top:724.50px;font-size:13px;line-height:16px;letter-spacing:0.45px;color:#000;font-weight:normal;font-family:'Liberation Sans',sans-serif;">u</div>
<svg class="r" style="left:20px;top:750px" width="16" height="13" viewBox="0 0 16 13"><path d="M4 2.5q0-2 2-2h4q2 0 2 2" fill="#f0c0a0" stroke="#b08070" stroke-width=".8"/><path d="M0.5 2.5h15l-1.5 2v8h-12v-8z" fill="#a8c8f0" stroke="#3050c0"/><path d="M2.5 4.5h11v7h-11z" fill="url(#fg)"/></svg>
<div class="t" style="left:38px;top:747.50px;font-size:13px;line-height:16px;letter-spacing:0.45px;color:#000;font-weight:normal;font-family:'Liberation Sans',sans-serif;">wan</div>
</div>
<div class="r" style="left:309px;top:92px;width:891px;height:847px;border:1px solid #a8a8a8;border-radius:8px 8px 0 0;background:#efefef"></div>
<div class="r" style="left:310px;top:119px;width:889px;height:1px;background:#a8a8a8"></div>
<svg class="r" style="left:861px;top:92px" width="210" height="28" viewBox="0 0 210 28"><defs><linearGradient id="tabg" x1="0" y1="0" x2="0" y2="1"><stop offset="0" stop-color="#fff"/><stop offset="1" stop-color="#f8f8f8"/></linearGradient></defs><path d="M1 28 V8 Q1 1 8 1 H168 C190 1 192 27 208 27 V28 Z" fill="url(#tabg)" stroke="#a8a8a8"/></svg>
<div class="r" style="left:862px;top:119px;width:206px;height:1px;background:#fff"></div>
<div class="r" style="left:492px;top:97px;width:1px;height:22px;background:#a8a8a8"></div>
<div class="r" style="left:676px;top:97px;width:1px;height:22px;background:#a8a8a8"></div>
<svg class="r" style="left:318px;top:97px" width="12" height="16" viewBox="0 0 12 16"><path d="M.5 .5h8l3 3v11H.5z" fill="#f4f4f8" stroke="#b09050"/><text x="3" y="11" font-size="10" font-weight="bold" fill="#2050b0" font-family="Liberation Sans">J</text><path d="M0 15l3.5-6 3.5 6z" fill="#f0c020" stroke="#806000" stroke-width=".6"/></svg>
<div class="t" style="left:333px;top:98.50px;font-size:13px;line-height:16px;letter-spacing:0.45px;color:#000;font-weight:normal;font-family:'Liberation Sans',sans-serif;">AbstractVersioningTe</div>
<svg class="r" style="left:502px;top:97px" width="12" height="16" viewBox="0 0 12 16"><path d="M.5 .5h8l3 3v11H.5z" fill="#f4f4f8" stroke="#b09050"/><text x="3" y="11" font-size="10" font-weight="bold" fill="#2050b0" font-family="Liberation Sans">J</text></svg>
<div class="t" style="left:516px;top:98.50px;font-size:13px;line-height:16px;letter-spacing:0.45px;color:#000;font-weight:normal;font-family:'Liberation Sans',sans-serif;">AssignRoleMapper.jav</div>
<svg class="r" style="left:686px;top:97px" width="12" height="16" viewBox="0 0 12 16"><path d="M.5 .5h8l3 3v11H.5z" fill="#f4f4f8" stroke="#b09050"/><text x="3" y="11" font-size="10" font-weight="bold" fill="#2050b0" font-family="Liberation Sans">J</text></svg>
<div class="t" style="left:701px;top:98.50px;font-size:13px;line-height:16px;letter-spacing:0.45px;color:#000;font-weight:normal;font-family:'Liberation Sans',sans-serif;">NonRegressionTests.j</div>
<svg class="r" style="left:868px;top:97px" width="16" height="16" viewBox="0 0 16 16"><circle cx="4" cy="4" r="3.5" fill="#b02020"/><path d="M4 4h5v5" stroke="#4070a0" fill="none"/><path d="M7 7l2 2 2-2" stroke="#4070a0" fill="none"/><circle cx="10" cy="12" r="3.5" fill="#4040b0"/></svg>
<div class="t" style="left:886px;top:98.50px;font-size:13px;line-height:16px;letter-spacing:0.45px;color:#000;font-weight:normal;font-family:'Liberation Sans',sans-serif;">Reiseorganisation (S</div>
<svg class="r" style="left:1024px;top:101px" width="12" height="11" viewBox="0 0 12 11"><path d="M2.5 2l7 7M9.5 2l-7 7" stroke="#000" stroke-width="4.4" stroke-linecap="square"/><path d="M2.5 2l7 7M9.5 2l-7 7" stroke="#fff" stroke-width="1.8" stroke-linecap="square"/></svg>
<div class="t" style="left:1061px;top:94.50px;font-size:13px;line-height:16px;letter-spacing:0px;color:#000;font-weight:bold;font-family:'Liberation Sans',sans-serif;">»</div>
<div class="t" style="left:1069px;top:101.69px;font-size:11px;line-height:13px;letter-spacing:0px;color:#000;font-weight:normal;font-family:'Liberation Sans',sans-serif;">8</div>
<div class="r" style="left:1165px;top:99px;width:11px;height:5px;border:1px solid #000;background:#fff"></div>
<div class="r" style="left:1183px;top:99px;width:11px;height:11px;border:1px solid #000;border-top-width:3px;background:#fff"></div>
<div class="r" style="left:310px;top:120px;width:889px;height:818px;background:#fff"></div>
<div class="r" style="left:311px;top:121px;width:758px;height:806px;background-color:#fff;background-image:linear-gradient(90deg,#c4c4c4 1px,transparent 1px),linear-gradient(#c4c4c4 1px,transparent 1px);background-size:14px 14px;background-position:1px 1px"></div>
<svg class="r" style="left:0;top:0;overflow:visible" width="1" height="1"><path d="M354 268 L420 244" stroke="#000" fill="none" stroke-dasharray="3 2"/><path d="M420 244 L410.2 243.3 L412.9 250.8Z" fill="#000"/><path d="M373 306 L440 244" stroke="#000" fill="none" stroke-dasharray="3 2"/><path d="M440 244 L430.7 247.2 L436.1 253.0Z" fill="#000"/><path d="M389 360 L449 244" stroke="#000" fill="none" stroke-dasharray="3 2"/><path d="M449 244 L441.3 250.2 L448.4 253.8Z" fill="#000"/><path d="M457 244 L437 462" stroke="#000" fill="none" stroke-dasharray="3 2"/><path d="M524 226 L721 208" stroke="#000" fill="none" stroke-dasharray="3 2"/><path d="M635 254 L721 220" stroke="#000" fill="none" stroke-dasharray="3 2"/><path d="M537 307 L575 283" stroke="#000" fill="none" stroke-dasharray="3 2"/><path d="M575 283 L565.3 284.4 L569.5 291.2Z" fill="#000"/><path d="M597 283 L600 462" stroke="#000" fill="none" stroke-dasharray="3 2"/><path d="M751 228 L737 289" stroke="#000" fill="none" stroke-dasharray="3 2"/><path d="M770 227 L841 320" stroke="#000" fill="none" stroke-dasharray="3 2"/><path d="M784 225 L903 313 L955 366" stroke="#000" fill="none" stroke-dasharray="3 2"/><path d="M723 317 L645 462" stroke="#000" fill="none" stroke-dasharray="3 2"/><path d="M835 348 L700 462" stroke="#000" fill="none" stroke-dasharray="3 2"/><path d="M943 394 L893 418 L790 462" stroke="#000" fill="none" stroke-dasharray="3 2"/><path d="M686 325 L700 318" stroke="#000" fill="none" stroke-dasharray="3 2"/><path d="M700 318 L690.2 318.4 L693.7 325.6Z" fill="#000"/><path d="M782 362 L814 349" stroke="#000" fill="none" stroke-dasharray="3 2"/><path d="M814 349 L804.2 348.7 L807.2 356.1Z" fill="#000"/><path d="M888 392 L908 388" stroke="#000" fill="none" stroke-dasharray="3 2"/><path d="M908 388 L898.4 385.8 L900.0 393.7Z" fill="#000"/><path d="M345 229 L394 229" stroke="#000" fill="none" /><path d="M394 229 L385.0 225.0 L385.0 233.0Z" fill="#000"/><path d="M519 224 L524 234 L528 266" stroke="#000" fill="none" /><path d="M528 266 L530.9 256.6 L522.9 257.6Z" fill="#000"/><path d="M662 263 L668 276 L680 304" stroke="#000" fill="none" /><path d="M680 304 L680.1 294.2 L672.8 297.3Z" fill="#000"/><path d="M786 298 L792 310 L804 334" stroke="#000" fill="none" /><path d="M804 334 L803.6 324.2 L796.4 327.7Z" fill="#000"/><path d="M894 330 L898 340 L908 380" stroke="#000" fill="none" /><path d="M908 380 L909.7 370.3 L901.9 372.2Z" fill="#000"/><path d="M1034 380 L1068 382" stroke="#000" fill="none" /><circle cx="332.5" cy="229.5" r="11.5" fill="#fff" stroke="#000"/></svg>
<svg class="r" style="left:0;top:0;overflow:visible" width="1" height="1"><rect x="395.5" y="215.5" width="129" height="29" rx="14.5" fill="#fff" stroke="#000"/></svg>
<div class="t" style="left:401px;top:221.50px;font-size:13px;line-height:16px;letter-spacing:0.45px;color:#000;font-weight:normal;font-family:'Liberation Sans',sans-serif;">Reiseziel festlegen</div>
<svg class="r" style="left:0;top:0;overflow:visible" width="1" height="1"><rect x="527.5" y="254.5" width="140" height="29" rx="14.5" fill="#fff" stroke="#000"/></svg>
<div class="t" style="left:534px;top:260.50px;font-size:13px;line-height:16px;letter-spacing:0.45px;color:#000;font-weight:normal;font-family:'Liberation Sans',sans-serif;">Reiseroute ansehen</div>
<svg class="r" style="left:0;top:0;overflow:visible" width="1" height="1"><rect x="677.5" y="289.5" width="113" height="29" rx="14.5" fill="#fff" stroke="#000"/></svg>
<div class="t" style="left:685px;top:295.50px;font-size:13px;line-height:16px;letter-spacing:0.45px;color:#000;font-weight:normal;font-family:'Liberation Sans',sans-serif;">Anreise buchen</div>
<svg class="r" style="left:0;top:0;overflow:visible" width="1" height="1"><rect x="802.5" y="320.5" width="98" height="29" rx="14.5" fill="#fff" stroke="#000"/></svg>
<div class="t" style="left:809px;top:326.50px;font-size:13px;line-height:16px;letter-spacing:0.45px;color:#000;font-weight:normal;font-family:'Liberation Sans',sans-serif;">Hotel buchen</div>
<svg class="r" style="left:0;top:0;overflow:visible" width="1" height="1"><rect x="908.5" y="366.5" width="126" height="29" rx="14.5" fill="#fff" stroke="#000"/></svg>
<div class="t" style="left:914px;top:372.50px;font-size:13px;line-height:16px;letter-spacing:0.45px;color:#000;font-weight:normal;font-family:'Liberation Sans',sans-serif;">Restaurant finden</div>
<svg width="0" height="0" style="position:absolute"><defs><linearGradient id="cyl" x1="0" y1="0" x2="1" y2="0"><stop offset="0" stop-color="#8a8a60"/><stop offset=".35" stop-color="#f4f4e0"/><stop offset=".7" stop-color="#b0b088"/><stop offset="1" stop-color="#5a5a38"/></linearGradient></defs></svg>
<svg class="r" style="left:331px;top:254px" width="24" height="23" viewBox="0 0 24 23"><path d="M9.5 1.5h12v2h1v18h-13z" fill="url(#cyl)" stroke="#50502c"/><rect x="11" y="2.5" width="9" height="2" fill="#fff"/><rect x="1" y="8" width="13" height="14.5" fill="#fff" stroke="#505050" stroke-width="1.5"/><path d="M3.5 11h8M3.5 14h8M3.5 17h8M3.5 20h8" stroke="#3a70b0" stroke-width="1.5"/></svg>
<div class="t" style="left:331px;top:278.84px;font-size:12px;line-height:14px;letter-spacing:0.3px;color:#000;font-weight:normal;font-family:'Liberation Sans',sans-serif;">Ziel</div>
<svg class="r" style="left:349px;top:303px" width="24" height="23" viewBox="0 0 24 23"><path d="M9.5 1.5h12v2h1v18h-13z" fill="url(#cyl)" stroke="#50502c"/><rect x="11" y="2.5" width="9" height="2" fill="#fff"/><rect x="1" y="8" width="13" height="14.5" fill="#fff" stroke="#505050" stroke-width="1.5"/><path d="M3.5 11h8M3.5 14h8M3.5 17h8M3.5 20h8" stroke="#3a70b0" stroke-width="1.5"/></svg>
<div class="t" style="left:346px;top:328.84px;font-size:12px;line-height:14px;letter-spacing:0.3px;color:#000;font-weight:normal;font-family:'Liberation Sans',sans-serif;">Start</div>
<svg class="r" style="left:366px;top:358px" width="24" height="23" viewBox="0 0 24 23"><path d="M9.5 1.5h12v2h1v18h-13z" fill="url(#cyl)" stroke="#50502c"/><rect x="11" y="2.5" width="9" height="2" fill="#fff"/><rect x="1" y="8" width="13" height="14.5" fill="#fff" stroke="#505050" stroke-width="1.5"/><path d="M3.5 11h8M3.5 14h8M3.5 17h8M3.5 20h8" stroke="#3a70b0" stroke-width="1.5"/></svg>
<div class="t" style="left:359px;top:383.84px;font-size:12px;line-height:14px;letter-spacing:0.3px;color:#000;font-weight:normal;font-family:'Liberation Sans',sans-serif;">Datum</div>
<svg class="r" style="left:510px;top:299px" width="24" height="23" viewBox="0 0 24 23"><path d="M9.5 1.5h12v2h1v18h-13z" fill="url(#cyl)" stroke="#50502c"/><rect x="11" y="2.5" width="9" height="2" fill="#fff"/><rect x="1" y="8" width="13" height="14.5" fill="#fff" stroke="#505050" stroke-width="1.5"/><path d="M3.5 11h8M3.5 14h8M3.5 17h8M3.5 20h8" stroke="#3a70b0" stroke-width="1.5"/></svg>
<div class="t" style="left:505px;top:324.84px;font-size:12px;line-height:14px;letter-spacing:0.3px;color:#000;font-weight:normal;font-family:'Liberation Sans',sans-serif;">Route</div>
<svg class="r" style="left:633px;top:322px" width="24" height="23" viewBox="0 0 24 23"><path d="M9.5 1.5h12v2h1v18h-13z" fill="url(#cyl)" stroke="#50502c"/><rect x="11" y="2.5" width="9" height="2" fill="#fff"/><rect x="1" y="8" width="13" height="14.5" fill="#fff" stroke="#505050" stroke-width="1.5"/><path d="M3.5 11h8M3.5 14h8M3.5 17h8M3.5 20h8" stroke="#3a70b0" stroke-width="1.5"/></svg>
<div class="t" style="left:602px;top:347.84px;font-size:12px;line-height:14px;letter-spacing:0.3px;color:#000;font-weight:normal;font-family:'Liberation Sans',sans-serif;">Zugverbindung</div>
<svg class="r" style="left:752px;top:351px" width="24" height="23" viewBox="0 0 24 23"><path d="M9.5 1.5h12v2h1v18h-13z" fill="url(#cyl)" stroke="#50502c"/><rect x="11" y="2.5" width="9" height="2" fill="#fff"/><rect x="1" y="8" width="13" height="14.5" fill="#fff" stroke="#505050" stroke-width="1.5"/><path d="M3.5 11h8M3.5 14h8M3.5 17h8M3.5 20h8" stroke="#3a70b0" stroke-width="1.5"/></svg>
<div class="t" style="left:745px;top:375.84px;font-size:12px;line-height:14px;letter-spacing:0.3px;color:#000;font-weight:normal;font-family:'Liberation Sans',sans-serif;">Hotels</div>
<svg class="r" style="left:843px;top:377px" width="24" height="23" viewBox="0 0 24 23"><path d="M9.5 1.5h12v2h1v18h-13z" fill="url(#cyl)" stroke="#50502c"/><rect x="11" y="2.5" width="9" height="2" fill="#fff"/><rect x="1" y="8" width="13" height="14.5" fill="#fff" stroke="#505050" stroke-width="1.5"/><path d="M3.5 11h8M3.5 14h8M3.5 17h8M3.5 20h8" stroke="#3a70b0" stroke-width="1.5"/></svg>
<div class="t" style="left:820px;top:402.84px;font-size:12px;line-height:14px;letter-spacing:0.3px;color:#000;font-weight:normal;font-family:'Liberation Sans',sans-serif;">Restaurants</div>
<svg class="r" style="left:745px;top:184px" width="22" height="24" viewBox="0 0 22 24"><circle cx="11" cy="4" r="3" fill="#a8c8f0" stroke="#4070b0"/><path d="M8 8h6v9h-1v6h-4v-6H8z" fill="#a8c8f0" stroke="#4070b0"/><path d="M5 8l-4 5 4 5M17 8l4 5-4 5" stroke="#4080d0" stroke-width="1.5" fill="none"/></svg>
<div class="t" style="left:721px;top:210.84px;font-size:12px;line-height:14px;letter-spacing:0.3px;color:#000;font-weight:normal;font-family:'Liberation Sans',sans-serif;">Geschäftlich</div>
<div class="r" style="left:1069px;top:120px;width:130px;height:807px;background:#fff"></div>
<div class="r" style="left:1071px;top:120px;width:1px;height:807px;background:#c0c0c0"></div>
<div class="r" style="left:1072px;top:121px;width:124px;height:24px;background:linear-gradient(#f4f4f4,#e8e8e8)"></div>
<div class="r" style="left:1072px;top:145px;width:124px;height:1px;background:#c0c0c0"></div>
<svg class="r" style="left:1076px;top:125px" width="16" height="16" viewBox="0 0 16 16"><circle cx="8" cy="8" r="7.5" fill="#e4e8f0" stroke="#b0b8c8"/><circle cx="5" cy="4.5" r="1.6" fill="#f0a020"/><circle cx="10" cy="4" r="1.6" fill="#40a040"/><circle cx="4" cy="8.5" r="1.6" fill="#f07020"/><circle cx="12" cy="8" r="1.6" fill="#20a020"/><circle cx="6" cy="12" r="1.6" fill="#e02020"/><circle cx="10" cy="12" r="1.6" fill="#2050e0"/></svg>
<div class="t" style="left:1094px;top:125.50px;font-size:13px;line-height:16px;letter-spacing:0.45px;color:#000;font-weight:normal;font-family:'Liberation Sans',sans-serif;">Palette</div>
<svg class="r" style="left:1182px;top:127px" width="8" height="14" viewBox="0 0 8 14"><path d="M1 1v12l6-6z" fill="#fff" stroke="#000" stroke-width="1.3"/></svg>
<div class="r" style="left:1086px;top:149px;width:87px;height:20px;background:#cfe2f8;border-radius:2px"></div>
<svg class="r" style="left:1092px;top:151px" width="11" height="16" viewBox="0 0 11 16"><path d="M1 1v13l3-3 3 5 2-1-3-5h4z" fill="#fff8d0" stroke="#605030"/></svg>
<div class="t" style="left:1107px;top:150.50px;font-size:13px;line-height:16px;letter-spacing:0.45px;color:#000;font-weight:normal;font-family:'Liberation Sans',sans-serif;">Select</div>
<svg class="r" style="left:1090px;top:174px" width="14" height="14" viewBox="0 0 14 14"><path d="M1 1h11v11H1z" fill="none" stroke="#806020" stroke-dasharray="2 2"/><path d="M9 12h5M11.5 9.5v5" stroke="#2050a0" stroke-width="1.5"/></svg>
<div class="t" style="left:1107px;top:173.50px;font-size:13px;line-height:16px;letter-spacing:0.45px;color:#000;font-weight:normal;font-family:'Liberation Sans',sans-serif;">Marquee</div>
<div class="r" style="left:1072px;top:196px;width:125px;height:1px;background:#b8b8b8"></div>
<div class="r" style="left:1072px;top:197px;width:125px;height:1px;background:#e4e4e4"></div>
<div class="r" style="left:1072px;top:198px;width:124px;height:20px;background:linear-gradient(#f4f4f4,#ececec)"></div>
<svg class="r" style="left:1075px;top:201px" width="17" height="13" viewBox="0 0 17 13"><path d="M.5 .5h6l1 2h7v3H.5z" fill="#f4d080" stroke="#b08030"/><path d="M.5 12.5l3-7h13l-3 7z" fill="#fce0a0" stroke="#b08030"/></svg>
<div class="t" style="left:1093px;top:199.50px;font-size:13px;line-height:16px;letter-spacing:0.45px;color:#000;font-weight:normal;font-family:'Liberation Sans',sans-serif;">Activity Ele...</div>
<div class="t" style="left:1183px;top:201.69px;font-size:11px;line-height:13px;letter-spacing:0px;color:#707070;font-weight:normal;font-family:'Liberation Sans',sans-serif;">⇔</div>
<svg class="r" style="left:1088px;top:224px" width="16" height="12" viewBox="0 0 16 12"><rect x=".5" y="1.5" width="14" height="9" rx="4.5" fill="#fff" stroke="#000"/></svg>
<div class="t" style="left:1107px;top:222.50px;font-size:13px;line-height:16px;letter-spacing:0.45px;color:#000;font-weight:normal;font-family:'Liberation Sans',sans-serif;">Action</div>
<svg class="r" style="left:1089px;top:249px" width="12" height="12" viewBox="0 0 12 12"><circle cx="6" cy="6" r="4" fill="#404040"/></svg>
<div class="t" style="left:1107px;top:245.50px;font-size:13px;line-height:16px;letter-spacing:0.45px;color:#000;font-weight:normal;font-family:'Liberation Sans',sans-serif;">Initial Node</div>
<svg class="r" style="left:1088px;top:271px" width="14" height="14" viewBox="0 0 14 14"><circle cx="7" cy="7" r="6" fill="#fff" stroke="#000"/><circle cx="7" cy="7" r="4" fill="#404040"/></svg>
<div class="t" style="left:1107px;top:268.50px;font-size:13px;line-height:16px;letter-spacing:0.45px;color:#000;font-weight:normal;font-family:'Liberation Sans',sans-serif;">Final Node</div>
<svg class="r" style="left:1087px;top:292px" width="16" height="16" viewBox="0 0 16 16"><rect x="1" y="6" width="8" height="9" fill="#fff" stroke="#2060b0"/><circle cx="11" cy="6" r="4.5" fill="#fff" stroke="#2060b0"/></svg>
<div class="t" style="left:1107px;top:291.50px;font-size:13px;line-height:16px;letter-spacing:0.45px;color:#000;font-weight:normal;font-family:'Liberation Sans',sans-serif;">Event</div>
<svg class="r" style="left:1088px;top:316px" width="15" height="16" viewBox="0 0 15 16"><path d="M4 1v14M1 8h3M4 4h10M4 12h10M11 2l3 2-3 2M11 10l3 2-3 2" stroke="#303030" fill="none"/></svg>
<div class="t" style="left:1107px;top:314.50px;font-size:13px;line-height:16px;letter-spacing:0.45px;color:#000;font-weight:normal;font-family:'Liberation Sans',sans-serif;">Fork Node</div>
<svg class="r" style="left:1088px;top:339px" width="15" height="16" viewBox="0 0 15 16"><path d="M4 1v14M4 8h10M1 4h3M1 12h3M11 6l3 2-3 2" stroke="#303030" fill="none"/></svg>
<div class="t" style="left:1107px;top:337.50px;font-size:13px;line-height:16px;letter-spacing:0.45px;color:#000;font-weight:normal;font-family:'Liberation Sans',sans-serif;">Join Node</div>
<svg class="r" style="left:1087px;top:361px" width="16" height="16" viewBox="0 0 16 16"><path d="M8 1l7 7-7 7-7-7z" fill="#fff" stroke="#303030"/><text x="5" y="12" font-size="9" font-weight="bold" fill="#8020a0" font-family="Liberation Sans">?</text></svg>
<div class="t" style="left:1107px;top:360.50px;font-size:13px;line-height:16px;letter-spacing:0.45px;color:#000;font-weight:normal;font-family:'Liberation Sans',sans-serif;">Decision</div>
<div class="t" style="left:1107px;top:375.50px;font-size:13px;line-height:16px;letter-spacing:0.45px;color:#000;font-weight:normal;font-family:'Liberation Sans',sans-serif;">Node</div>
<svg class="r" style="left:1087px;top:398px" width="16" height="16" viewBox="0 0 16 16"><path d="M8 1l7 7-7 7-7-7z" fill="#fff" stroke="#303030"/><path d="M8 4v5M8 11v1.5" stroke="#8020a0" stroke-width="1.8"/></svg>
<div class="t" style="left:1107px;top:397.50px;font-size:13px;line-height:16px;letter-spacing:0.45px;color:#000;font-weight:normal;font-family:'Liberation Sans',sans-serif;">Merge Node</div>
<div class="t" style="left:1089px;top:420.50px;font-size:13px;line-height:16px;letter-spacing:0.45px;color:#000;font-weight:normal;font-family:'Liberation Sans',sans-serif;">==</div>
<div class="t" style="left:1107px;top:420.50px;font-size:13px;line-height:16px;letter-spacing:0.45px;color:#000;font-weight:normal;font-family:'Liberation Sans',sans-serif;">Guard</div>
<div class="r" style="left:1076px;top:443px;width:119px;height:1px;background:#b8b8b8"></div>
<svg class="r" style="left:1086px;top:450px" width="20" height="12" viewBox="0 0 20 12"><circle cx="4" cy="5" r="3.5" fill="#c02020"/><circle cx="14" cy="5" r="3.5" fill="#c02020"/></svg>
<div class="t" style="left:1107px;top:448.50px;font-size:13px;line-height:16px;letter-spacing:0.45px;color:#000;font-weight:normal;font-family:'Liberation Sans',sans-serif;">Embedded</div>
<div class="r" style="left:71px;top:460px;width:1137px;height:471px;background:#000"></div>
<div class="r" style="left:72px;top:461px;width:1135px;height:466px;background:#eeeeee"></div>
<div class="r" style="left:72px;top:928px;width:1135px;height:2px;background:#fff"></div>
<div class="r" style="left:72px;top:461px;width:1135px;height:19px;background:linear-gradient(#4485d0,#6494c8);border-top:1px solid #8cc4fc;border-bottom:1px solid #3070b4"></div>
<div class="r" style="left:1164px;top:461px;width:43px;height:19px;background:#eeeeee;clip-path:polygon(0 19px,9px 10px,43px 10px,43px 19px)"></div>
<svg class="r" style="left:1163px;top:461px" width="44" height="20" viewBox="0 0 44 20"><path d="M0.5 19 L9.5 9.5 H44" stroke="#3070b4" fill="none"/></svg>
<div class="r" style="left:1171.0px;top:464px;width:13px;height:13px;border-radius:50%;background:radial-gradient(circle at 50% 40%,#fff 30%,#e8ecf0 65%,#b8c0cc);box-shadow:0 1px 1px #8890a0"></div>
<div class="r" style="left:1189.0px;top:464px;width:13px;height:13px;border-radius:50%;background:radial-gradient(circle at 50% 40%,#fff 30%,#e8ecf0 65%,#b8c0cc);box-shadow:0 1px 1px #8890a0"></div>
<svg class="r" style="left:1172px;top:465px" width="11" height="11" viewBox="0 0 11 11"><rect x="1.5" y="1.5" width="7" height="7" fill="#8aa8d8" stroke="#202838" stroke-width="1.4"/><path d="M1.5 2h7" stroke="#202838" stroke-width="2"/></svg>
<svg class="r" style="left:1190px;top:465px" width="11" height="11" viewBox="0 0 11 11"><path d="M2 2l7 7M9 2l-7 7" stroke="#202838" stroke-width="1.6"/></svg>
<div class="r" style="left:77px;top:463px;width:14px;height:14px;border-radius:50%;background:radial-gradient(circle at 40% 35%,#fff,#dde1e6 60%,#99a);"></div>
<div class="r" style="left:80px;top:466px;width:8px;height:8px;background:repeating-conic-gradient(#333 0 25%,transparent 0 50%) 0 0/2px 2px"></div>
<div class="t" style="left:97px;top:462.84px;font-size:12px;line-height:14px;letter-spacing:0px;color:#fff;font-weight:bold;font-family:'Liberation Sans',sans-serif;">Preferences</div>
<div class="r" style="left:75px;top:480px;width:180px;height:391px;background:#fff"></div>
<div class="r" style="left:82px;top:487px;width:141px;height:22px;background:#fff;border-top:1px solid #000;border-left:1px solid #000;box-shadow:inset 1px 1px 0 #777;border-right:1px solid #f0f0f0;border-bottom:1px solid #f0f0f0"></div>
<div class="r" style="left:86px;top:491px;width:87px;height:16px;background:#6a8db5"></div>
<div class="t" style="left:86px;top:490.50px;font-size:13px;line-height:16px;letter-spacing:0.45px;color:#fff;font-weight:normal;font-family:'Liberation Sans',sans-serif;">type filter text</div>
<div class="r" style="left:82px;top:518px;width:155px;height:334px;overflow:hidden">
<svg class="r" style="left:4px;top:6px" width="7" height="11" viewBox="0 0 7 11"><path d="M.8 .8v9.4l5-4.7z" fill="#fff" stroke="#000" stroke-width="1.2"/></svg>
<div class="t" style="left:22px;top:3.50px;font-size:13px;line-height:16px;letter-spacing:0.45px;color:#000;font-weight:normal;font-family:'Liberation Sans',sans-serif;">General</div>
<svg class="r" style="left:4px;top:29px" width="7" height="11" viewBox="0 0 7 11"><path d="M.8 .8v9.4l5-4.7z" fill="#fff" stroke="#000" stroke-width="1.2"/></svg>
<div class="t" style="left:22px;top:26.50px;font-size:13px;line-height:16px;letter-spacing:0.45px;color:#000;font-weight:normal;font-family:'Liberation Sans',sans-serif;">Agent Controller</div>
<svg class="r" style="left:4px;top:52px" width="7" height="11" viewBox="0 0 7 11"><path d="M.8 .8v9.4l5-4.7z" fill="#fff" stroke="#000" stroke-width="1.2"/></svg>
<div class="t" style="left:22px;top:49.50px;font-size:13px;line-height:16px;letter-spacing:0.45px;color:#000;font-weight:normal;font-family:'Liberation Sans',sans-serif;">Ant</div>
<svg class="r" style="left:4px;top:75px" width="7" height="11" viewBox="0 0 7 11"><path d="M.8 .8v9.4l5-4.7z" fill="#fff" stroke="#000" stroke-width="1.2"/></svg>
<div class="t" style="left:22px;top:72.50px;font-size:13px;line-height:16px;letter-spacing:0.45px;color:#000;font-weight:normal;font-family:'Liberation Sans',sans-serif;">ATL</div>
<svg class="r" style="left:4px;top:98px" width="7" height="11" viewBox="0 0 7 11"><path d="M.8 .8v9.4l5-4.7z" fill="#fff" stroke="#000" stroke-width="1.2"/></svg>
<div class="t" style="left:22px;top:95.50px;font-size:13px;line-height:16px;letter-spacing:0.45px;color:#000;font-weight:normal;font-family:'Liberation Sans',sans-serif;">B2J</div>
<svg class="r" style="left:4px;top:121px" width="7" height="11" viewBox="0 0 7 11"><path d="M.8 .8v9.4l5-4.7z" fill="#fff" stroke="#000" stroke-width="1.2"/></svg>
<div class="t" style="left:22px;top:118.50px;font-size:13px;line-height:16px;letter-spacing:0.45px;color:#000;font-weight:normal;font-family:'Liberation Sans',sans-serif;">BPMN Diagrams</div>
<div class="t" style="left:22px;top:141.50px;font-size:13px;line-height:16px;letter-spacing:0.45px;color:#000;font-weight:normal;font-family:'Liberation Sans',sans-serif;">Buddies</div>
<svg class="r" style="left:4px;top:167px" width="7" height="11" viewBox="0 0 7 11"><path d="M.8 .8v9.4l5-4.7z" fill="#fff" stroke="#000" stroke-width="1.2"/></svg>
<div class="t" style="left:22px;top:164.50px;font-size:13px;line-height:16px;letter-spacing:0.45px;color:#000;font-weight:normal;font-family:'Liberation Sans',sans-serif;">CDO</div>
<div class="r" style="left:0px;top:184px;width:154px;height:23px;background:#6a8db5"></div>
<div class="t" style="left:22px;top:187.50px;font-size:13px;line-height:16px;letter-spacing:0.45px;color:#fff;font-weight:normal;font-family:'Liberation Sans',sans-serif;">Code Generation</div>
<svg class="r" style="left:4px;top:213px" width="7" height="11" viewBox="0 0 7 11"><path d="M.8 .8v9.4l5-4.7z" fill="#fff" stroke="#000" stroke-width="1.2"/></svg>
<div class="t" style="left:22px;top:210.50px;font-size:13px;line-height:16px;letter-spacing:0.45px;color:#000;font-weight:normal;font-family:'Liberation Sans',sans-serif;">Data Management</div>
<svg class="r" style="left:4px;top:236px" width="7" height="11" viewBox="0 0 7 11"><path d="M.8 .8v9.4l5-4.7z" fill="#fff" stroke="#000" stroke-width="1.2"/></svg>
<div class="t" style="left:22px;top:233.50px;font-size:13px;line-height:16px;letter-spacing:0.45px;color:#000;font-weight:normal;font-family:'Liberation Sans',sans-serif;">Ecore Diagram</div>
<svg class="r" style="left:4px;top:259px" width="7" height="11" viewBox="0 0 7 11"><path d="M.8 .8v9.4l5-4.7z" fill="#fff" stroke="#000" stroke-width="1.2"/></svg>
<div class="t" style="left:22px;top:256.50px;font-size:13px;line-height:16px;letter-spacing:0.45px;color:#000;font-weight:normal;font-family:'Liberation Sans',sans-serif;">Ecore Tools Diagram</div>
<div class="t" style="left:22px;top:279.50px;font-size:13px;line-height:16px;letter-spacing:0.45px;color:#000;font-weight:normal;font-family:'Liberation Sans',sans-serif;">EMF Compare</div>
<svg class="r" style="left:4px;top:305px" width="7" height="11" viewBox="0 0 7 11"><path d="M.8 .8v9.4l5-4.7z" fill="#fff" stroke="#000" stroke-width="1.2"/></svg>
<div class="t" style="left:22px;top:302.50px;font-size:13px;line-height:16px;letter-spacing:0.45px;color:#000;font-weight:normal;font-family:'Liberation Sans',sans-serif;">Help</div>
<svg class="r" style="left:4px;top:328px" width="7" height="11" viewBox="0 0 7 11"><path d="M.8 .8v9.4l5-4.7z" fill="#fff" stroke="#000" stroke-width="1.2"/></svg>
<div class="t" style="left:22px;top:325.50px;font-size:13px;line-height:16px;letter-spacing:0.45px;color:#000;font-weight:normal;font-family:'Liberation Sans',sans-serif;">Install/Update</div>
</div>
<div class="r" style="left:239px;top:518px;width:15px;height:334px;background:#c3c3c3"></div>
<div class="r" style="left:239px;top:518px;width:15px;height:14px;background:#efefef;border-top:1px solid #fff;border-left:1px solid #fff;border-right:1px solid #000;border-bottom:1px solid #000;box-sizing:border-box;"></div>
<svg class="r" style="left:242px;top:522px" width="9" height="6" viewBox="0 0 9 6"><path d="M1 5h7L4.5 1z" fill="#d0d0d0"/></svg>
<div class="r" style="left:239px;top:532px;width:15px;height:124px;background:#efefef;border-top:1px solid #fff;border-left:1px solid #fff;border-right:1px solid #000;border-bottom:1px solid #000;box-sizing:border-box;"></div>
<div class="r" style="left:239px;top:837px;width:15px;height:15px;background:#efefef;border-top:1px solid #fff;border-left:1px solid #fff;border-right:1px solid #000;border-bottom:1px solid #000;box-sizing:border-box;"></div>
<svg class="r" style="left:242px;top:842px" width="9" height="6" viewBox="0 0 9 6"><path d="M1 1h7L4.5 5z" fill="#000"/></svg>
<div class="r" style="left:82px;top:856px;width:155px;height:15px;background:#c3c3c3"></div>
<div class="r" style="left:82px;top:856px;width:15px;height:15px;background:#efefef;border-top:1px solid #fff;border-left:1px solid #fff;border-right:1px solid #000;border-bottom:1px solid #000;box-sizing:border-box;"></div>
<svg class="r" style="left:85px;top:860px" width="8" height="8" viewBox="0 0 8 8"><path d="M6 1v6L2 4z" fill="#d0d0d0"/></svg>
<div class="r" style="left:97px;top:856px;width:122px;height:15px;background:#efefef;border-top:1px solid #fff;border-left:1px solid #fff;border-right:1px solid #000;border-bottom:1px solid #000;box-sizing:border-box;"></div>
<div class="r" style="left:220px;top:856px;width:16px;height:15px;background:#efefef;border-top:1px solid #fff;border-left:1px solid #fff;border-right:1px solid #000;border-bottom:1px solid #000;box-sizing:border-box;"></div>
<svg class="r" style="left:224px;top:859px" width="8" height="9" viewBox="0 0 8 9"><path d="M2 1v7l4-3.5z" fill="#000"/></svg>
<div class="r" style="left:258px;top:480px;width:1px;height:392px;background:#a8a8a8"></div>
<div class="r" style="left:259px;top:480px;width:1px;height:392px;background:#fff"></div>
<div class="t" style="left:272px;top:489.50px;font-size:13px;line-height:16px;letter-spacing:0.95px;color:#000;font-weight:bold;font-family:'Liberation Sans',sans-serif;">Code Generation</div>
<svg class="r" style="left:1108px;top:492px" width="18" height="14" viewBox="0 0 18 14"><path d="M1 7l6-6v3h7v6H7v3z" fill="#f0e8c8" stroke="#a09060"/></svg>
<svg class="r" style="left:1127px;top:497px" width="6" height="4" viewBox="0 0 6 4"><path d="M0 0h6L3 3z" fill="#b0b0b0"/></svg>
<svg class="r" style="left:1141px;top:492px" width="18" height="14" viewBox="0 0 18 14"><path d="M17 7l-6-6v3H4v6h7v3z" fill="#f0e8c8" stroke="#a09060"/></svg>
<svg class="r" style="left:1160px;top:497px" width="6" height="4" viewBox="0 0 6 4"><path d="M0 0h6L3 3z" fill="#b0b0b0"/></svg>
<svg class="r" style="left:1179px;top:496px" width="12" height="7" viewBox="0 0 12 7"><path d="M0 0h12L6 6z" fill="#303060"/></svg>
<div class="r" style="left:260px;top:518px;width:944px;height:1px;background:#a8a8a8"></div>
<div class="r" style="left:260px;top:519px;width:944px;height:1px;background:#fff"></div>
<div class="t" style="left:272px;top:524.50px;font-size:13px;line-height:16px;letter-spacing:0.45px;color:#000;font-weight:normal;font-family:'Liberation Sans',sans-serif;">Code Generation Preferences</div>
<div class="t" style="left:272px;top:550.50px;font-size:13px;line-height:16px;letter-spacing:0.55px;color:#000;font-weight:normal;font-family:'Liberation Sans',sans-serif;">Path to implementation.jar:</div>
<div class="r" style="left:457px;top:548px;width:639px;height:22px;background:#fff;border-top:1px solid #000;border-left:1px solid #000;box-shadow:inset 1px 1px 0 #777;border-right:1px solid #f8f8f8;border-bottom:1px solid #f8f8f8"></div>
<div class="t" style="left:459px;top:550.50px;font-size:13px;line-height:16px;letter-spacing:0.33px;color:#000;font-weight:normal;font-family:'Liberation Sans',sans-serif;">/home/vignerap/Jar/de.uniAugsburg.wf-codegen.JWT2BPELforAgilProIntegrationFramework_1.0.1.jar</div>
<div class="r" style="left:1105px;top:545px;width:94px;height:27px;background:#efefef;border-top:1px solid #fff;border-left:1px solid #fff;border-right:1px solid #000;border-bottom:1px solid #000;box-sizing:border-box;"></div>
<div class="t" style="left:1122px;top:550.50px;font-size:13px;line-height:16px;letter-spacing:0.45px;color:#000;font-weight:normal;font-family:'Liberation Sans',sans-serif;"><u>B</u>rowse...</div>
<div class="r" style="left:274px;top:581px;width:13px;height:13px;background:#fff;border:1px solid #000;box-shadow:inset 0 0 0 .5px #000"></div>
<svg class="r" style="left:275px;top:582px" width="11" height="11" viewBox="0 0 11 11"><path d="M2 6.5l2.5 1.8L8.5 3" stroke="#000" stroke-width="1.3" fill="none"/></svg>
<div class="t" style="left:294px;top:579.50px;font-size:13px;line-height:16px;letter-spacing:0.45px;color:#000;font-weight:normal;font-family:'Liberation Sans',sans-serif;">Use default Configuration:</div>
<div class="r" style="left:274px;top:607px;width:13px;height:13px;background:#fff;border:1px solid #000;box-shadow:inset 0 0 0 .5px #000"></div>
<div class="t" style="left:294px;top:605.50px;font-size:13px;line-height:16px;letter-spacing:0.45px;color:#000;font-weight:normal;font-family:'Liberation Sans',sans-serif;">Load XML_File:</div>
<div class="t" style="left:272px;top:632.50px;font-size:13px;line-height:16px;letter-spacing:0.45px;color:#000;font-weight:normal;font-family:'Liberation Sans',sans-serif;">Configuration Name:</div>
<div class="r" style="left:457px;top:630px;width:186px;height:22px;background:#fff;border-top:1px solid #000;border-left:1px solid #000;box-shadow:inset 1px 1px 0 #777;border-right:1px solid #f8f8f8;border-bottom:1px solid #f8f8f8"></div>
<div class="t" style="left:460px;top:632.50px;font-size:13px;line-height:16px;letter-spacing:0.45px;color:#000;font-weight:normal;font-family:'Liberation Sans',sans-serif;">AgilPro2BPEL</div>
<div class="t" style="left:272px;top:660.50px;font-size:13px;line-height:16px;letter-spacing:0.45px;color:#000;font-weight:normal;font-family:'Liberation Sans',sans-serif;">ModellerAdapter:</div>
<div class="r" style="left:457px;top:658px;width:186px;height:22px;background:#fff;border-top:1px solid #000;border-left:1px solid #000;box-shadow:inset 1px 1px 0 #777;border-right:1px solid #f8f8f8;border-bottom:1px solid #f8f8f8"></div>
<div class="t" style="left:272px;top:688.50px;font-size:13px;line-height:16px;letter-spacing:0.45px;color:#000;font-weight:normal;font-family:'Liberation Sans',sans-serif;">intern Graph Generator:</div>
<div class="r" style="left:457px;top:686px;width:186px;height:22px;background:#fff;border-top:1px solid #000;border-left:1px solid #000;box-shadow:inset 1px 1px 0 #777;border-right:1px solid #f8f8f8;border-bottom:1px solid #f8f8f8"></div>
<div class="t" style="left:272px;top:716.50px;font-size:13px;line-height:16px;letter-spacing:0.45px;color:#000;font-weight:normal;font-family:'Liberation Sans',sans-serif;">Transformer:</div>
<div class="r" style="left:457px;top:714px;width:186px;height:22px;background:#fff;border-top:1px solid #000;border-left:1px solid #000;box-shadow:inset 1px 1px 0 #777;border-right:1px solid #f8f8f8;border-bottom:1px solid #f8f8f8"></div>
<div class="t" style="left:272px;top:744.50px;font-size:13px;line-height:16px;letter-spacing:0.45px;color:#000;font-weight:normal;font-family:'Liberation Sans',sans-serif;">Traverser/Visitor:</div>
<div class="r" style="left:457px;top:742px;width:186px;height:22px;background:#fff;border-top:1px solid #000;border-left:1px solid #000;box-shadow:inset 1px 1px 0 #777;border-right:1px solid #f8f8f8;border-bottom:1px solid #f8f8f8"></div>
<div class="t" style="left:272px;top:772.50px;font-size:13px;line-height:16px;letter-spacing:0.45px;color:#000;font-weight:normal;font-family:'Liberation Sans',sans-serif;">Generators(seperated by ;):</div>
<div class="r" style="left:457px;top:770px;width:186px;height:22px;background:#fff;border-top:1px solid #000;border-left:1px solid #000;box-shadow:inset 1px 1px 0 #777;border-right:1px solid #f8f8f8;border-bottom:1px solid #f8f8f8"></div>
<div class="t" style="left:272px;top:800.50px;font-size:13px;line-height:16px;letter-spacing:0.45px;color:#000;font-weight:normal;font-family:'Liberation Sans',sans-serif;">Guardhandler:</div>
<div class="r" style="left:457px;top:798px;width:186px;height:22px;background:#fff;border-top:1px solid #000;border-left:1px solid #000;box-shadow:inset 1px 1px 0 #777;border-right:1px solid #f8f8f8;border-bottom:1px solid #f8f8f8"></div>
<div class="r" style="left:981px;top:840px;width:119px;height:27px;background:#efefef;border-top:1px solid #fff;border-left:1px solid #fff;border-right:1px solid #000;border-bottom:1px solid #000;box-sizing:border-box;"></div>
<div class="t" style="left:988px;top:845.50px;font-size:13px;line-height:16px;letter-spacing:0.45px;color:#000;font-weight:normal;font-family:'Liberation Sans',sans-serif;">Restore <u>D</u>efaults</div>
<div class="r" style="left:1105px;top:840px;width:94px;height:27px;background:#efefef;border-top:1px solid #fff;border-left:1px solid #fff;border-right:1px solid #000;border-bottom:1px solid #000;box-sizing:border-box;"></div>
<div class="t" style="left:1135px;top:845.50px;font-size:13px;line-height:16px;letter-spacing:0.45px;color:#000;font-weight:normal;font-family:'Liberation Sans',sans-serif;"><u>A</u>pply</div>
<div class="r" style="left:72px;top:871px;width:1135px;height:1px;background:#a8a8a8"></div>
<div class="r" style="left:72px;top:872px;width:1135px;height:1px;background:#fff"></div>
<svg class="r" style="left:90px;top:891px" width="18" height="18" viewBox="0 0 18 18"><circle cx="9" cy="9" r="7.5" fill="#f4f6fa" stroke="#4a6a9a" stroke-width="1.3"/><text x="5.2" y="13.5" font-size="11" fill="#3a5a8a" font-family="Liberation Sans">?</text></svg>
<div class="r" style="left:999px;top:886px;width:94px;height:28px;background:#efefef;border-top:1px solid #fff;border-left:1px solid #fff;border-right:2px solid #000;border-bottom:2px solid #000;outline:1px solid #000"></div>
<div class="t" style="left:1037px;top:892.50px;font-size:13px;line-height:16px;letter-spacing:0.45px;color:#000;font-weight:normal;font-family:'Liberation Sans',sans-serif;">OK</div>
<div class="r" style="left:1099px;top:886px;width:94px;height:27px;background:#efefef;border-top:1px solid #fff;border-left:1px solid #fff;border-right:1px solid #000;border-bottom:1px solid #000;box-sizing:border-box;"></div>
<div class="t" style="left:1125px;top:892.50px;font-size:13px;line-height:16px;letter-spacing:0.45px;color:#000;font-weight:normal;font-family:'Liberation Sans',sans-serif;">Cancel</div>
<div class="r" style="left:1208px;top:0px;width:72px;height:550px;background:#5c6464"></div>
<div class="r" style="left:1208px;top:40px;width:2px;height:510px;background:#22b8e0"></div>
<div class="r" style="left:1278px;top:40px;width:2px;height:510px;background:#22b8e0"></div>
<div class="r" style="left:1210px;top:0px;width:4px;height:550px;background:linear-gradient(90deg,#7a8282,#4a5252)"></div>
<div class="r" style="left:1274px;top:0px;width:4px;height:550px;background:linear-gradient(90deg,#4a5252,#7a8282)"></div>
<div class="r" style="left:1210px;top:0px;width:68px;height:16px;background:linear-gradient(#8a9292,#5c6464)"></div>
<div class="t" style="left:1222px;top:1.54px;font-size:10px;line-height:12px;letter-spacing:0px;color:#f0f0e8;font-weight:normal;font-family:'Liberation Serif',sans-serif;text-shadow:1px 1px 0 #000">freed45363</div>
<div class="r" style="left:1214px;top:16px;width:60px;height:29px;background:#1e2424;border-radius:2px 2px 4px 4px"></div>
<div class="r" style="left:1218px;top:17px;width:52px;height:14px;background:linear-gradient(#5a6868,#6e7c7c)"></div>
<div class="r" style="left:1218px;top:31px;width:52px;height:1px;background:#8a9494"></div>
<div class="r" style="left:1218px;top:32px;width:52px;height:12px;background:linear-gradient(#5a6868,#6e7c7c);border-radius:0 0 3px 3px"></div>
<div class="t" style="left:1220px;top:19.38px;font-size:9px;line-height:11px;letter-spacing:0px;color:#e8e8d8;font-weight:bold;font-family:'Liberation Serif',sans-serif;text-shadow:1px 1px 0 #000">jeu</div>
<div class="t" style="left:1236px;top:16.50px;font-size:13px;line-height:16px;letter-spacing:0px;color:#e8e8d8;font-weight:normal;font-family:'Liberation Serif',sans-serif;text-shadow:1px 1px 0 #000">31</div>
<div class="t" style="left:1255px;top:19.38px;font-size:9px;line-height:11px;letter-spacing:0px;color:#e8e8d8;font-weight:bold;font-family:'Liberation Serif',sans-serif;text-shadow:1px 1px 0 #000">jui</div>
<div class="t" style="left:1220px;top:30.84px;font-size:12px;line-height:14px;letter-spacing:0px;color:#e8e8d8;font-weight:normal;font-family:'Liberation Serif',sans-serif;text-shadow:1px 1px 0 #000">07:43</div>
<div class="t" style="left:1256px;top:32.53px;font-size:10px;line-height:12px;letter-spacing:0px;color:#e8e8d8;font-weight:normal;font-family:'Liberation Serif',sans-serif;text-shadow:1px 1px 0 #000">54</div>
<div class="r" style="left:1214px;top:45px;width:60px;height:49px;background:repeating-linear-gradient(#646c72 0 1px,#50585e 1px 3px,#3a4248 3px 8px,#22282e 8px 9px,#0e1216 9px 10px),#333"></div>
<svg class="r" style="left:1214px;top:45px" width="60" height="49" viewBox="0 0 60 49"><rect x="0" y="44" width="1" height="5" fill="#10d8e0"/><rect x="1" y="49" width="1" height="0" fill="#10d8e0"/><rect x="2" y="45" width="1" height="4" fill="#10d8e0"/><rect x="3" y="47" width="1" height="2" fill="#10d8e0"/><rect x="3" y="47" width="1" height="2" fill="#d89040"/><rect x="4" y="37" width="1" height="12" fill="#10d8e0"/><rect x="5" y="36" width="1" height="13" fill="#10d8e0"/><rect x="5" y="47" width="1" height="2" fill="#d89040"/><rect x="6" y="34" width="1" height="15" fill="#10d8e0"/><rect x="7" y="29" width="1" height="20" fill="#10d8e0"/><rect x="7" y="47" width="1" height="2" fill="#d89040"/><rect x="8" y="49" width="1" height="0" fill="#10d8e0"/><rect x="9" y="48" width="1" height="1" fill="#10d8e0"/><rect x="10" y="35" width="1" height="14" fill="#10d8e0"/><rect x="10" y="47" width="1" height="2" fill="#d89040"/><rect x="11" y="47" width="1" height="2" fill="#10d8e0"/><rect x="12" y="45" width="1" height="4" fill="#10d8e0"/><rect x="12" y="47" width="1" height="2" fill="#d89040"/><rect x="13" y="47" width="1" height="2" fill="#10d8e0"/><rect x="14" y="46" width="1" height="3" fill="#10d8e0"/><rect x="15" y="45" width="1" height="4" fill="#10d8e0"/><rect x="16" y="26" width="1" height="23" fill="#10d8e0"/><rect x="17" y="7" width="1" height="42" fill="#10d8e0"/><rect x="18" y="13" width="1" height="36" fill="#10d8e0"/><rect x="19" y="39" width="1" height="10" fill="#10d8e0"/><rect x="19" y="47" width="1" height="2" fill="#d89040"/><rect x="20" y="14" width="1" height="35" fill="#10d8e0"/><rect x="21" y="46" width="1" height="3" fill="#10d8e0"/><rect x="22" y="45" width="1" height="4" fill="#10d8e0"/><rect x="23" y="48" width="1" height="1" fill="#10d8e0"/><rect x="24" y="8" width="1" height="41" fill="#10d8e0"/><rect x="25" y="45" width="1" height="4" fill="#10d8e0"/><rect x="26" y="35" width="1" height="14" fill="#10d8e0"/><rect x="27" y="45" width="1" height="4" fill="#10d8e0"/><rect x="27" y="47" width="1" height="2" fill="#d89040"/><rect x="28" y="45" width="1" height="4" fill="#10d8e0"/><rect x="29" y="46" width="1" height="3" fill="#10d8e0"/><rect x="30" y="46" width="1" height="3" fill="#10d8e0"/><rect x="30" y="47" width="1" height="2" fill="#d89040"/><rect x="31" y="48" width="1" height="1" fill="#10d8e0"/><rect x="32" y="22" width="1" height="27" fill="#10d8e0"/><rect x="33" y="44" width="1" height="5" fill="#10d8e0"/><rect x="34" y="47" width="1" height="2" fill="#10d8e0"/><rect x="35" y="45" width="1" height="4" fill="#10d8e0"/><rect x="35" y="47" width="1" height="2" fill="#d89040"/><rect x="36" y="35" width="1" height="14" fill="#10d8e0"/><rect x="37" y="46" width="1" height="3" fill="#10d8e0"/><rect x="37" y="47" width="1" height="2" fill="#d89040"/><rect x="38" y="14" width="1" height="35" fill="#10d8e0"/><rect x="39" y="48" width="1" height="1" fill="#10d8e0"/><rect x="40" y="44" width="1" height="5" fill="#10d8e0"/><rect x="41" y="46" width="1" height="3" fill="#10d8e0"/><rect x="42" y="38" width="1" height="11" fill="#10d8e0"/><rect x="43" y="48" width="1" height="1" fill="#10d8e0"/><rect x="44" y="48" width="1" height="1" fill="#10d8e0"/><rect x="45" y="39" width="1" height="10" fill="#10d8e0"/><rect x="45" y="47" width="1" height="2" fill="#d89040"/><rect x="46" y="27" width="1" height="22" fill="#10d8e0"/><rect x="46" y="47" width="1" height="2" fill="#d89040"/><rect x="47" y="49" width="1" height="0" fill="#10d8e0"/><rect x="48" y="47" width="1" height="2" fill="#10d8e0"/><rect x="48" y="47" width="1" height="2" fill="#d89040"/><rect x="49" y="47" width="1" height="2" fill="#10d8e0"/><rect x="49" y="47" width="1" height="2" fill="#d89040"/><rect x="50" y="47" width="1" height="2" fill="#10d8e0"/><rect x="51" y="47" width="1" height="2" fill="#10d8e0"/><rect x="52" y="45" width="1" height="4" fill="#10d8e0"/><rect x="53" y="49" width="1" height="0" fill="#10d8e0"/><rect x="54" y="44" width="1" height="5" fill="#10d8e0"/><rect x="54" y="47" width="1" height="2" fill="#d89040"/><rect x="55" y="45" width="1" height="4" fill="#10d8e0"/><rect x="56" y="46" width="1" height="3" fill="#10d8e0"/><rect x="57" y="22" width="1" height="27" fill="#10d8e0"/><rect x="57" y="47" width="1" height="2" fill="#d89040"/><rect x="58" y="45" width="1" height="4" fill="#10d8e0"/><rect x="59" y="46" width="1" height="3" fill="#10d8e0"/></svg>
<div class="t" style="left:1217px;top:45.38px;font-size:9px;line-height:11px;letter-spacing:0px;color:#a0e8f0;font-weight:bold;font-family:'Liberation Serif',sans-serif;text-shadow:1px 1px 0 #000">u</div>
<div class="t" style="left:1225px;top:44.69px;font-size:11px;line-height:13px;letter-spacing:0px;color:#f0c080;font-weight:bold;font-family:'Liberation Serif',sans-serif;text-shadow:1px 1px 0 #000">4%</div>
<div class="t" style="left:1217px;top:54.38px;font-size:9px;line-height:11px;letter-spacing:0px;color:#a0e8f0;font-weight:bold;font-family:'Liberation Serif',sans-serif;text-shadow:1px 1px 0 #000">s</div>
<div class="t" style="left:1225px;top:53.69px;font-size:11px;line-height:13px;letter-spacing:0px;color:#f0c080;font-weight:bold;font-family:'Liberation Serif',sans-serif;text-shadow:1px 1px 0 #000">1%</div>
<div class="r" style="left:1214px;top:94px;width:60px;height:12px;background:linear-gradient(#8c9696,#6a7474 60%,#566060);border-radius:4px;border:1px solid #2a3030"></div>
<div class="t" style="left:1229px;top:93.69px;font-size:11px;line-height:13px;letter-spacing:0px;color:#e8e8d8;font-weight:bold;font-family:'Liberation Serif',sans-serif;text-shadow:1px 1px 0 #000">CPU0</div>
<div class="r" style="left:1214px;top:106px;width:60px;height:50px;background:repeating-linear-gradient(#646c72 0 1px,#50585e 1px 3px,#3a4248 3px 8px,#22282e 8px 9px,#0e1216 9px 10px),#333"></div>
<svg class="r" style="left:1214px;top:106px" width="60" height="50" viewBox="0 0 60 50"><rect x="0" y="29" width="1" height="21" fill="#10d8e0"/><rect x="0" y="48" width="1" height="2" fill="#d89040"/><rect x="1" y="49" width="1" height="1" fill="#10d8e0"/><rect x="2" y="40" width="1" height="10" fill="#10d8e0"/><rect x="2" y="48" width="1" height="2" fill="#d89040"/><rect x="3" y="50" width="1" height="0" fill="#10d8e0"/><rect x="4" y="48" width="1" height="2" fill="#10d8e0"/><rect x="5" y="36" width="1" height="14" fill="#10d8e0"/><rect x="6" y="48" width="1" height="2" fill="#10d8e0"/><rect x="7" y="30" width="1" height="20" fill="#10d8e0"/><rect x="8" y="18" width="1" height="32" fill="#10d8e0"/><rect x="9" y="25" width="1" height="25" fill="#10d8e0"/><rect x="10" y="50" width="1" height="0" fill="#10d8e0"/><rect x="10" y="48" width="1" height="2" fill="#d89040"/><rect x="11" y="47" width="1" height="3" fill="#10d8e0"/><rect x="12" y="9" width="1" height="41" fill="#10d8e0"/><rect x="13" y="16" width="1" height="34" fill="#10d8e0"/><rect x="14" y="39" width="1" height="11" fill="#10d8e0"/><rect x="15" y="45" width="1" height="5" fill="#10d8e0"/><rect x="16" y="45" width="1" height="5" fill="#10d8e0"/><rect x="17" y="36" width="1" height="14" fill="#10d8e0"/><rect x="17" y="48" width="1" height="2" fill="#d89040"/><rect x="18" y="48" width="1" height="2" fill="#10d8e0"/><rect x="19" y="39" width="1" height="11" fill="#10d8e0"/><rect x="20" y="48" width="1" height="2" fill="#10d8e0"/><rect x="21" y="36" width="1" height="14" fill="#10d8e0"/><rect x="22" y="49" width="1" height="1" fill="#10d8e0"/><rect x="23" y="42" width="1" height="8" fill="#10d8e0"/><rect x="24" y="45" width="1" height="5" fill="#10d8e0"/><rect x="25" y="45" width="1" height="5" fill="#10d8e0"/><rect x="26" y="47" width="1" height="3" fill="#10d8e0"/><rect x="27" y="48" width="1" height="2" fill="#10d8e0"/><rect x="28" y="47" width="1" height="3" fill="#10d8e0"/><rect x="29" y="43" width="1" height="7" fill="#10d8e0"/><rect x="30" y="50" width="1" height="0" fill="#10d8e0"/><rect x="31" y="46" width="1" height="4" fill="#10d8e0"/><rect x="31" y="48" width="1" height="2" fill="#d89040"/><rect x="32" y="50" width="1" height="0" fill="#10d8e0"/><rect x="32" y="48" width="1" height="2" fill="#d89040"/><rect x="33" y="50" width="1" height="0" fill="#10d8e0"/><rect x="34" y="48" width="1" height="2" fill="#10d8e0"/><rect x="34" y="48" width="1" height="2" fill="#d89040"/><rect x="35" y="50" width="1" height="0" fill="#10d8e0"/><rect x="36" y="44" width="1" height="6" fill="#10d8e0"/><rect x="36" y="48" width="1" height="2" fill="#d89040"/><rect x="37" y="49" width="1" height="1" fill="#10d8e0"/><rect x="38" y="50" width="1" height="0" fill="#10d8e0"/><rect x="38" y="48" width="1" height="2" fill="#d89040"/><rect x="39" y="44" width="1" height="6" fill="#10d8e0"/><rect x="40" y="49" width="1" height="1" fill="#10d8e0"/><rect x="41" y="50" width="1" height="0" fill="#10d8e0"/><rect x="42" y="49" width="1" height="1" fill="#10d8e0"/><rect x="42" y="48" width="1" height="2" fill="#d89040"/><rect x="43" y="48" width="1" height="2" fill="#10d8e0"/><rect x="44" y="46" width="1" height="4" fill="#10d8e0"/><rect x="44" y="48" width="1" height="2" fill="#d89040"/><rect x="45" y="50" width="1" height="0" fill="#10d8e0"/><rect x="46" y="47" width="1" height="3" fill="#10d8e0"/><rect x="47" y="18" width="1" height="32" fill="#10d8e0"/><rect x="48" y="37" width="1" height="13" fill="#10d8e0"/><rect x="49" y="46" width="1" height="4" fill="#10d8e0"/><rect x="50" y="48" width="1" height="2" fill="#10d8e0"/><rect x="51" y="14" width="1" height="36" fill="#10d8e0"/><rect x="52" y="47" width="1" height="3" fill="#10d8e0"/><rect x="53" y="20" width="1" height="30" fill="#10d8e0"/><rect x="53" y="48" width="1" height="2" fill="#d89040"/><rect x="54" y="48" width="1" height="2" fill="#10d8e0"/><rect x="55" y="42" width="1" height="8" fill="#10d8e0"/><rect x="56" y="49" width="1" height="1" fill="#10d8e0"/><rect x="56" y="48" width="1" height="2" fill="#d89040"/><rect x="57" y="46" width="1" height="4" fill="#10d8e0"/><rect x="57" y="48" width="1" height="2" fill="#d89040"/><rect x="58" y="8" width="1" height="42" fill="#10d8e0"/><rect x="59" y="23" width="1" height="27" fill="#10d8e0"/></svg>
<div class="t" style="left:1217px;top:105.38px;font-size:9px;line-height:11px;letter-spacing:0px;color:#a0e8f0;font-weight:bold;font-family:'Liberation Serif',sans-serif;text-shadow:1px 1px 0 #000">u</div>
<div class="t" style="left:1225px;top:104.69px;font-size:11px;line-height:13px;letter-spacing:0px;color:#f0c080;font-weight:bold;font-family:'Liberation Serif',sans-serif;text-shadow:1px 1px 0 #000">6%</div>
<div class="t" style="left:1217px;top:114.38px;font-size:9px;line-height:11px;letter-spacing:0px;color:#a0e8f0;font-weight:bold;font-family:'Liberation Serif',sans-serif;text-shadow:1px 1px 0 #000">s</div>
<div class="t" style="left:1225px;top:113.69px;font-size:11px;line-height:13px;letter-spacing:0px;color:#f0c080;font-weight:bold;font-family:'Liberation Serif',sans-serif;text-shadow:1px 1px 0 #000">3%</div>
<div class="r" style="left:1214px;top:156px;width:60px;height:12px;background:linear-gradient(#8c9696,#6a7474 60%,#566060);border-radius:4px;border:1px solid #2a3030"></div>
<div class="t" style="left:1229px;top:155.69px;font-size:11px;line-height:13px;letter-spacing:0px;color:#e8e8d8;font-weight:bold;font-family:'Liberation Serif',sans-serif;text-shadow:1px 1px 0 #000">CPU1</div>
<div class="r" style="left:1214px;top:168px;width:60px;height:13px;background:linear-gradient(#8c9696,#6a7474 60%,#566060);border-radius:4px;border:1px solid #2a3030"></div>
<div class="t" style="left:1214px;top:170.38px;font-size:9px;line-height:11px;letter-spacing:0px;color:#e8e8d8;font-weight:bold;font-family:'Liberation Serif',sans-serif;text-shadow:1px 1px 0 #000">2% firefox-bi</div>
<div class="r" style="left:1214px;top:182px;width:60px;height:13px;background:linear-gradient(#8c9696,#6a7474 60%,#566060);border-radius:4px;border:1px solid #2a3030"></div>
<div class="t" style="left:1214px;top:184.38px;font-size:9px;line-height:11px;letter-spacing:0px;color:#e8e8d8;font-weight:bold;font-family:'Liberation Serif',sans-serif;text-shadow:1px 1px 0 #000">2% Xorg</div>
<div class="r" style="left:1214px;top:196px;width:60px;height:13px;background:linear-gradient(#8c9696,#6a7474 60%,#566060);border-radius:4px;border:1px solid #2a3030"></div>
<div class="r" style="left:1214px;top:210px;width:60px;height:11px;background:linear-gradient(#8c9696,#6a7474 60%,#566060);border-radius:4px;border:1px solid #2a3030"></div>
<div class="t" style="left:1222px;top:209.53px;font-size:10px;line-height:12px;letter-spacing:0px;color:#e8e8d8;font-weight:bold;font-family:'Liberation Serif',sans-serif;text-shadow:1px 1px 0 #000">3016MHz</div>
<div class="r" style="left:1214px;top:222px;width:60px;height:49px;background:repeating-linear-gradient(#646c72 0 1px,#50585e 1px 3px,#3a4248 3px 8px,#22282e 8px 9px,#0e1216 9px 10px),#333"></div>
<div class="t" style="left:1215px;top:218.69px;font-size:11px;line-height:13px;letter-spacing:0px;color:#f0c080;font-weight:bold;font-family:'Liberation Serif',sans-serif;text-shadow:1px 1px 0 #000">l 0,5</div>
<div class="t" style="left:1215px;top:228.69px;font-size:11px;line-height:13px;letter-spacing:0px;color:#f0c080;font-weight:bold;font-family:'Liberation Serif',sans-serif;text-shadow:1px 1px 0 #000">f 4</div>
<div class="t" style="left:1215px;top:238.69px;font-size:11px;line-height:13px;letter-spacing:0px;color:#f0c080;font-weight:bold;font-family:'Liberation Serif',sans-serif;text-shadow:1px 1px 0 #000">p 230</div>
<div class="t" style="left:1215px;top:248.69px;font-size:11px;line-height:13px;letter-spacing:0px;color:#f0c080;font-weight:bold;font-family:'Liberation Serif',sans-serif;text-shadow:1px 1px 0 #000">u 1</div>
<svg class="r" style="left:1214px;top:261px" width="60" height="10" viewBox="0 0 60 10"><rect x="0" y="4" width="1" height="5" fill="#20c0c8"/><rect x="1" y="6" width="1" height="3" fill="#20c0c8"/><rect x="2" y="6" width="1" height="3" fill="#20c0c8"/><rect x="3" y="4" width="1" height="5" fill="#20c0c8"/><rect x="4" y="8" width="1" height="1" fill="#20c0c8"/><rect x="5" y="5" width="1" height="4" fill="#20c0c8"/><rect x="6" y="7" width="1" height="2" fill="#20c0c8"/><rect x="7" y="8" width="1" height="1" fill="#20c0c8"/><rect x="8" y="7" width="1" height="2" fill="#20c0c8"/><rect x="9" y="8" width="1" height="1" fill="#20c0c8"/><rect x="10" y="6" width="1" height="3" fill="#20c0c8"/><rect x="11" y="5" width="1" height="4" fill="#20c0c8"/><rect x="12" y="7" width="1" height="2" fill="#20c0c8"/><rect x="13" y="5" width="1" height="4" fill="#20c0c8"/><rect x="14" y="4" width="1" height="5" fill="#20c0c8"/><rect x="15" y="8" width="1" height="1" fill="#20c0c8"/><rect x="16" y="4" width="1" height="5" fill="#20c0c8"/><rect x="17" y="7" width="1" height="2" fill="#20c0c8"/><rect x="18" y="8" width="1" height="1" fill="#20c0c8"/><rect x="19" y="7" width="1" height="2" fill="#20c0c8"/><rect x="20" y="5" width="1" height="4" fill="#20c0c8"/><rect x="21" y="6" width="1" height="3" fill="#20c0c8"/><rect x="22" y="7" width="1" height="2" fill="#20c0c8"/><rect x="23" y="5" width="1" height="4" fill="#20c0c8"/><rect x="24" y="7" width="1" height="2" fill="#20c0c8"/><rect x="25" y="8" width="1" height="1" fill="#20c0c8"/><rect x="26" y="7" width="1" height="2" fill="#20c0c8"/><rect x="27" y="4" width="1" height="5" fill="#20c0c8"/><rect x="28" y="4" width="1" height="5" fill="#20c0c8"/><rect x="29" y="5" width="1" height="4" fill="#20c0c8"/><rect x="30" y="7" width="1" height="2" fill="#20c0c8"/><rect x="31" y="7" width="1" height="2" fill="#20c0c8"/><rect x="32" y="8" width="1" height="1" fill="#20c0c8"/><rect x="33" y="8" width="1" height="1" fill="#20c0c8"/><rect x="34" y="7" width="1" height="2" fill="#20c0c8"/><rect x="35" y="7" width="1" height="2" fill="#20c0c8"/><rect x="36" y="7" width="1" height="2" fill="#20c0c8"/><rect x="37" y="7" width="1" height="2" fill="#20c0c8"/><rect x="38" y="6" width="1" height="3" fill="#20c0c8"/><rect x="39" y="6" width="1" height="3" fill="#20c0c8"/><rect x="40" y="7" width="1" height="2" fill="#20c0c8"/><rect x="41" y="4" width="1" height="5" fill="#20c0c8"/><rect x="42" y="7" width="1" height="2" fill="#20c0c8"/><rect x="43" y="7" width="1" height="2" fill="#20c0c8"/><rect x="44" y="7" width="1" height="2" fill="#20c0c8"/><rect x="45" y="5" width="1" height="4" fill="#20c0c8"/><rect x="46" y="6" width="1" height="3" fill="#20c0c8"/><rect x="47" y="8" width="1" height="1" fill="#20c0c8"/><rect x="48" y="6" width="1" height="3" fill="#20c0c8"/><rect x="49" y="5" width="1" height="4" fill="#20c0c8"/><rect x="50" y="7" width="1" height="2" fill="#20c0c8"/><rect x="51" y="7" width="1" height="2" fill="#20c0c8"/><rect x="52" y="6" width="1" height="3" fill="#20c0c8"/><rect x="53" y="8" width="1" height="1" fill="#20c0c8"/><rect x="54" y="6" width="1" height="3" fill="#20c0c8"/><rect x="55" y="6" width="1" height="3" fill="#20c0c8"/><rect x="56" y="4" width="1" height="5" fill="#20c0c8"/><rect x="57" y="4" width="1" height="5" fill="#20c0c8"/><rect x="58" y="8" width="1" height="1" fill="#20c0c8"/><rect x="59" y="4" width="1" height="5" fill="#20c0c8"/><rect x="0" y="6" width="60" height="4" fill="#10e0e8"/><path d="M0 .5h20l2 2h10l5 2h10l3-2h10" stroke="#e0a050" fill="none"/></svg>
<div class="r" style="left:1214px;top:271px;width:60px;height:11px;background:linear-gradient(#8c9696,#6a7474 60%,#566060);border-radius:4px;border:1px solid #2a3030"></div>
<div class="t" style="left:1218px;top:270.54px;font-size:10px;line-height:12px;letter-spacing:0px;color:#e8e8d8;font-weight:bold;font-family:'Liberation Serif',sans-serif;text-shadow:1px 1px 0 #000">Processus</div>
<div class="r" style="left:1214px;top:283px;width:60px;height:14px;background:linear-gradient(#7a8484,#5e6868);border:1px solid #2a3030;border-radius:3px"></div>
<div class="t" style="left:1216px;top:284.38px;font-size:9px;line-height:11px;letter-spacing:0px;color:#e8e8d8;font-weight:normal;font-family:'Liberation Serif',sans-serif;text-shadow:1px 1px 0 #000">THRM</div>
<div class="r" style="left:1246px;top:285px;width:26px;height:10px;background:#4a5a60"></div>
<div class="t" style="left:1248px;top:284.38px;font-size:9px;line-height:11px;letter-spacing:0px;color:#50e0e0;font-weight:bold;font-family:'Liberation Serif',sans-serif;text-shadow:1px 1px 0 #000">51,0C</div>
<div class="r" style="left:1214px;top:297px;width:60px;height:50px;background:repeating-linear-gradient(#5a6268 0 1px,#3e464c 1px 3px,#1a1e22 3px 5px),#333"></div>
<div class="t" style="left:1250px;top:297.38px;font-size:9px;line-height:11px;letter-spacing:0px;color:#80e0e8;font-weight:bold;font-family:'Liberation Serif',sans-serif;text-shadow:1px 1px 0 #000">5,0M</div>
<div class="t" style="left:1217px;top:307.38px;font-size:9px;line-height:11px;letter-spacing:0px;color:#a0e8f0;font-weight:bold;font-family:'Liberation Serif',sans-serif;text-shadow:1px 1px 0 #000">r</div>
<div class="t" style="left:1227px;top:306.69px;font-size:11px;line-height:13px;letter-spacing:0px;color:#f0c080;font-weight:bold;font-family:'Liberation Serif',sans-serif;text-shadow:1px 1px 0 #000">0</div>
<div class="r" style="left:1214px;top:321px;width:60px;height:2px;background:#808888"></div>
<div class="r" style="left:1214px;top:323px;width:60px;height:1px;background:repeating-linear-gradient(90deg,#d89040 0 2px,transparent 2px 4px)"></div>
<div class="t" style="left:1216px;top:323.38px;font-size:9px;line-height:11px;letter-spacing:0px;color:#a0e8f0;font-weight:bold;font-family:'Liberation Serif',sans-serif;text-shadow:1px 1px 0 #000">w</div>
<div class="t" style="left:1227px;top:321.69px;font-size:11px;line-height:13px;letter-spacing:0px;color:#f0c080;font-weight:bold;font-family:'Liberation Serif',sans-serif;text-shadow:1px 1px 0 #000">0</div>
<div class="r" style="left:1214px;top:348px;width:60px;height:11px;background:linear-gradient(#8c9696,#6a7474 60%,#566060);border-radius:4px;border:1px solid #2a3030"></div>
<div class="t" style="left:1236px;top:347.54px;font-size:10px;line-height:12px;letter-spacing:0px;color:#e8e8d8;font-weight:bold;font-family:'Liberation Serif',sans-serif;text-shadow:1px 1px 0 #000">sda</div>
<div class="r" style="left:1214px;top:359px;width:60px;height:50px;background:repeating-linear-gradient(#5a6268 0 1px,#3e464c 1px 3px,#1a1e22 3px 5px),#333"></div>
<div class="t" style="left:1234px;top:359.38px;font-size:9px;line-height:11px;letter-spacing:0px;color:#80e0e8;font-weight:bold;font-family:'Liberation Serif',sans-serif;text-shadow:1px 1px 0 #000">100K</div>
<div class="t" style="left:1217px;top:369.38px;font-size:9px;line-height:11px;letter-spacing:0px;color:#a0e8f0;font-weight:bold;font-family:'Liberation Serif',sans-serif;text-shadow:1px 1px 0 #000">r</div>
<div class="t" style="left:1224px;top:367.69px;font-size:11px;line-height:13px;letter-spacing:0px;color:#f0c080;font-weight:bold;font-family:'Liberation Serif',sans-serif;text-shadow:1px 1px 0 #000">600</div>
<div class="r" style="left:1214px;top:381px;width:60px;height:1px;background:#20c0c8"></div>
<div class="r" style="left:1214px;top:383px;width:60px;height:2px;background:#808888"></div>
<div class="r" style="left:1214px;top:385px;width:60px;height:1px;background:#d89040"></div>
<div class="t" style="left:1217px;top:385.38px;font-size:9px;line-height:11px;letter-spacing:0px;color:#a0e8f0;font-weight:bold;font-family:'Liberation Serif',sans-serif;text-shadow:1px 1px 0 #000">t</div>
<div class="t" style="left:1224px;top:383.69px;font-size:11px;line-height:13px;letter-spacing:0px;color:#f0c080;font-weight:bold;font-family:'Liberation Serif',sans-serif;text-shadow:1px 1px 0 #000">2,2K</div>
<div class="r" style="left:1214px;top:410px;width:60px;height:11px;background:linear-gradient(#8c9696,#6a7474 60%,#566060);border-radius:4px;border:1px solid #2a3030"></div>
<div class="t" style="left:1236px;top:409.54px;font-size:10px;line-height:12px;letter-spacing:0px;color:#e8e8d8;font-weight:bold;font-family:'Liberation Serif',sans-serif;text-shadow:1px 1px 0 #000">eth0</div>
<div class="r" style="left:1217px;top:414px;width:10px;height:3px;background:#20c0c0"></div>
<div class="r" style="left:1261px;top:414px;width:10px;height:3px;background:#e0a050"></div>
<div class="r" style="left:1214px;top:421px;width:60px;height:39px;background:repeating-linear-gradient(#5a6268 0 1px,#3e464c 1px 3px,#1a1e22 3px 5px),#333"></div>
<div class="t" style="left:1217px;top:420.38px;font-size:9px;line-height:11px;letter-spacing:0px;color:#a0e8f0;font-weight:bold;font-family:'Liberation Serif',sans-serif;text-shadow:1px 1px 0 #000">i</div>
<div class="t" style="left:1226px;top:418.69px;font-size:11px;line-height:13px;letter-spacing:0px;color:#f0c080;font-weight:bold;font-family:'Liberation Serif',sans-serif;text-shadow:1px 1px 0 #000">0</div>
<div class="t" style="left:1244px;top:420.38px;font-size:9px;line-height:11px;letter-spacing:0px;color:#80e0e8;font-weight:bold;font-family:'Liberation Serif',sans-serif;text-shadow:1px 1px 0 #000">100</div>
<div class="r" style="left:1214px;top:440px;width:60px;height:2px;background:#808888"></div>
<div class="t" style="left:1217px;top:447.38px;font-size:9px;line-height:11px;letter-spacing:0px;color:#a0e8f0;font-weight:bold;font-family:'Liberation Serif',sans-serif;text-shadow:1px 1px 0 #000">o</div>
<div class="t" style="left:1226px;top:445.69px;font-size:11px;line-height:13px;letter-spacing:0px;color:#f0c080;font-weight:bold;font-family:'Liberation Serif',sans-serif;text-shadow:1px 1px 0 #000">0</div>
<div class="r" style="left:1214px;top:461px;width:60px;height:25px;background:linear-gradient(#6a7474,#505a5a);border:1px solid #303838;border-radius:2px"></div>
<div class="t" style="left:1220px;top:461.54px;font-size:10px;line-height:12px;letter-spacing:0px;color:#e8e8d8;font-weight:bold;font-family:'Liberation Serif',sans-serif;text-shadow:1px 1px 0 #000">Mémoire</div>
<div class="t" style="left:1229px;top:474.54px;font-size:10px;line-height:12px;letter-spacing:0px;color:#e8e8d8;font-weight:bold;font-family:'Liberation Serif',sans-serif;text-shadow:1px 1px 0 #000">Swap</div>
<div class="r" style="left:1214px;top:486px;width:60px;height:34px;background:#3a4248"></div>
<div class="r" style="left:1216px;top:489px;width:56px;height:13px;background:linear-gradient(90deg,#5a6a7a,#8a9aaa);border-radius:2px"></div>
<div class="r" style="left:1216px;top:503px;width:56px;height:13px;background:linear-gradient(90deg,#5a6a7a,#8a9aaa);border-radius:2px"></div>
<div class="t" style="left:1218px;top:490.54px;font-size:10px;line-height:12px;letter-spacing:0px;color:#e8e8d8;font-weight:bold;font-family:'Liberation Serif',sans-serif;text-shadow:1px 1px 0 #000">/</div>
<div class="t" style="left:1216px;top:504.54px;font-size:10px;line-height:12px;letter-spacing:0px;color:#e8e8d8;font-weight:bold;font-family:'Liberation Serif',sans-serif;text-shadow:1px 1px 0 #000">home</div>
<div class="r" style="left:1265px;top:494px;width:3px;height:3px;background:#b0f040;border-radius:50%"></div>
<div class="r" style="left:1265px;top:508px;width:3px;height:3px;background:#b0f040;border-radius:50%"></div>
<div class="r" style="left:1214px;top:520px;width:60px;height:16px;background:#3a4040"></div>
<div class="r" style="left:1216px;top:521px;width:16px;height:14px;background:#2a5a2a;border:1px solid #102010"></div>
<div class="t" style="left:1219px;top:522.69px;font-size:11px;line-height:13px;letter-spacing:0px;color:#000;font-weight:bold;font-family:'Liberation Sans',sans-serif;">N</div>
<div class="r" style="left:1236px;top:521px;width:16px;height:14px;background:#2a5a2a;border:1px solid #102010"></div>
<div class="t" style="left:1239px;top:522.69px;font-size:11px;line-height:13px;letter-spacing:0px;color:#000;font-weight:bold;font-family:'Liberation Sans',sans-serif;">C</div>
<div class="r" style="left:1256px;top:521px;width:16px;height:14px;background:#2a5a2a;border:1px solid #102010"></div>
<div class="t" style="left:1259px;top:522.69px;font-size:11px;line-height:13px;letter-spacing:0px;color:#000;font-weight:bold;font-family:'Liberation Sans',sans-serif;">S</div>
<div class="r" style="left:1208px;top:536px;width:72px;height:14px;background:linear-gradient(#7a8282,#4e5656)"></div>
<div class="t" style="left:1222px;top:536.53px;font-size:10px;line-height:12px;letter-spacing:0px;color:#e8e8d8;font-weight:bold;font-family:'Liberation Serif',sans-serif;text-shadow:1px 1px 0 #000">1d 16:53</div>
<div class="r" style="left:170px;top:977px;width:938px;height:47px;background:linear-gradient(#c8c8c8,#e4e4e4 50%,#f4f4f4)"></div>
<div class="r" style="left:177px;top:985px;width:33px;height:32px;background:linear-gradient(#6aaaf0,#2a6ac8);border:1px solid #1a4a98;border-radius:4px"></div>
<svg class="r" style="left:180px;top:988px" width="27" height="26" viewBox="0 0 27 26"><circle cx="11" cy="14" r="8" fill="none" stroke="#fff" stroke-width="3.5" stroke-dasharray="2.5 1.6"/><circle cx="11" cy="14" r="6" fill="none" stroke="#fff" stroke-width="2"/><path d="M12 3h4v8l6-8h4l-7 10 7 10h-4l-6-8v8h-4z" fill="#fff" stroke="#2a6ac8" stroke-width=".8"/></svg>
<svg class="r" style="left:219px;top:984px" width="36" height="34" viewBox="0 0 36 34"><path d="M1 22 L18 9 L34 20 L17 33 Z" fill="#2a80e8"/><path d="M3 22 L18 10.5 L32 20 L17 31 Z" fill="#60b0f8"/><path d="M8 15 L18 9 L27 19 L15 27 Z" fill="#eceef6"/><path d="M27 1 l3 2 -8 16 -3 2 0-3 z" fill="#f8c020" stroke="#c08010" stroke-width=".6"/></svg>
<svg class="r" style="left:264px;top:984px" width="34" height="34" viewBox="0 0 34 34"><path d="M6 22 L17 12 L28 22 V32 H6 Z" fill="#f4f4f4" stroke="#909090" stroke-width=".8"/><path d="M1 21 L17 1 L33 21 L30 23 L17 12 L4 23 Z" fill="#f06818"/><path d="M17 1 L33 21 L30 23 L17 12 Z" fill="#e05008"/><path d="M4 23 L17 12 L30 23" fill="none" stroke="#c03010" stroke-width="1"/><rect x="13" y="16" width="8" height="4" rx="2" fill="#a86848"/><rect x="14" y="24" width="6" height="8" fill="#f08828" stroke="#b06020" stroke-width=".6"/></svg>
<div class="r" style="left:312px;top:979px;width:27px;height:21px;background:#f4f4f4;border:1px solid #303030"></div>
<div class="r" style="left:314px;top:981px;width:23px;height:18px;background:#6a8cb4"></div>
<div class="r" style="left:318px;top:982px;width:15px;height:9px;background:#5a48a8;border-radius:4px 4px 0 0"></div>
<div class="t" style="left:322px;top:984.84px;font-size:12px;line-height:14px;letter-spacing:0px;color:#000;font-weight:normal;font-family:'Liberation Sans',sans-serif;">1</div>
<div class="r" style="left:342px;top:979px;width:26px;height:21px;background:#d4d4d4"></div>
<div class="t" style="left:351px;top:984.84px;font-size:12px;line-height:14px;letter-spacing:0px;color:#000;font-weight:normal;font-family:'Liberation Sans',sans-serif;">2</div>
<div class="r" style="left:371px;top:979px;width:26px;height:21px;background:#f4f4f4;border:1px solid #505050"></div>
<svg class="r" style="left:375px;top:981px" width="18" height="17" viewBox="0 0 18 17"><circle cx="9" cy="9" r="7" fill="#c0d8f0" stroke="#4070c0"/><path d="M4 10l10-3" stroke="#e04040" stroke-width="2"/></svg>
<div class="t" style="left:378px;top:984.84px;font-size:12px;line-height:14px;letter-spacing:0px;color:#000;font-weight:normal;font-family:'Liberation Sans',sans-serif;">3</div>
<div class="r" style="left:312px;top:1002px;width:27px;height:22px;background:#f4f4f4;border:1px solid #303030"></div>
<svg class="r" style="left:316px;top:1004px" width="18" height="17" viewBox="0 0 18 17"><circle cx="9" cy="9" r="7" fill="#2a4aa0"/><ellipse cx="9" cy="9" rx="4" ry="3" fill="#90b0e0"/></svg>
<div class="t" style="left:322px;top:1007.84px;font-size:12px;line-height:14px;letter-spacing:0px;color:#000;font-weight:normal;font-family:'Liberation Sans',sans-serif;">4</div>
<div class="r" style="left:342px;top:1002px;width:26px;height:22px;background:#f4f4f4;border:1px solid #505050"></div>
<svg class="r" style="left:346px;top:1004px" width="18" height="17" viewBox="0 0 18 17"><circle cx="9" cy="9" r="7" fill="#3040b0"/><ellipse cx="9" cy="9" rx="4" ry="3" fill="#b0c0f0"/></svg>
<div class="t" style="left:351px;top:1007.84px;font-size:12px;line-height:14px;letter-spacing:0px;color:#000;font-weight:normal;font-family:'Liberation Sans',sans-serif;">5</div>
<div class="r" style="left:371px;top:1002px;width:26px;height:22px;background:#f4f4f4;border:1px solid #303030"></div>
<div class="r" style="left:374px;top:1004px;width:20px;height:18px;background:#102090"></div>
<div class="t" style="left:378px;top:1007.84px;font-size:12px;line-height:14px;letter-spacing:0px;color:#000;font-weight:normal;font-family:'Liberation Sans',sans-serif;">6</div>
<div class="t" style="left:410px;top:979.50px;font-size:13px;line-height:16px;letter-spacing:0.2px;color:#000;font-weight:normal;font-family:'Liberation Sans',sans-serif;">Dictionnaire :</div>
<div class="r" style="left:503px;top:980px;width:16px;height:16px;background:linear-gradient(#fafafa,#dcdcdc);border:1px solid #909090;border-radius:3px"></div>
<div class="t" style="left:507px;top:983.53px;font-size:10px;line-height:12px;letter-spacing:0px;color:#000;font-weight:normal;font-family:'Liberation Sans',sans-serif;">C</div>
<div class="r" style="left:520px;top:980px;width:16px;height:16px;background:linear-gradient(#fafafa,#dcdcdc);border:1px solid #909090;border-radius:3px"></div>
<div class="t" style="left:524px;top:983.53px;font-size:10px;line-height:12px;letter-spacing:0px;color:#ccc;font-weight:normal;font-family:'Liberation Sans',sans-serif;">D</div>
<div class="r" style="left:537px;top:980px;width:16px;height:16px;background:linear-gradient(#fafafa,#dcdcdc);border:1px solid #909090;border-radius:3px"></div>
<div class="t" style="left:541px;top:983.53px;font-size:10px;line-height:12px;letter-spacing:0px;color:#ccc;font-weight:normal;font-family:'Liberation Sans',sans-serif;">T</div>
<div class="r" style="left:410px;top:999px;width:143px;height:21px;background:#fff;border:1px solid #808080;border-radius:3px"></div>
<div class="r" style="left:537px;top:1000px;width:15px;height:19px;background:linear-gradient(#f4f4f4,#d8d8d8);border-left:1px solid #909090"></div>
<svg class="r" style="left:540px;top:1006px" width="9" height="6" viewBox="0 0 9 6"><path d="M0 0h9L4.5 5z" fill="#000"/></svg>
<svg class="r" style="left:560px;top:985px" width="30" height="33" viewBox="0 0 30 33"><circle cx="14" cy="13" r="12" fill="#1a3a90"/><circle cx="11" cy="9" r="7" fill="#5a8ae0" opacity=".6"/><path d="M6 10q5-5 9 0t6 4" stroke="#d0e0ff" stroke-width="2" fill="none"/><path d="M14 25v4M7 29h14" stroke="#808080" stroke-width="2"/></svg>
<div class="r" style="left:607px;top:978px;width:46px;height:46px;background:linear-gradient(#cfcfcf,#f8f8f8);border-left:1px solid #404040;border-top:1px solid #404040;border-right:1px solid #fff"></div>
<svg class="r" style="left:614px;top:985px" width="32" height="32" viewBox="0 0 32 32"><circle cx="16" cy="16" r="14" fill="#3a9ae8"/><circle cx="12" cy="11" r="8" fill="#80c8f8" opacity=".7"/><path d="M10 8q6 2 4 8t6 6" stroke="#d0ecff" stroke-width="2" fill="none"/></svg>
<svg class="r" style="left:657px;top:986px" width="36" height="32" viewBox="0 0 36 32"><rect x="8" y="2" width="18" height="12" fill="#f8f8f8" stroke="#909090"/><rect x="2" y="12" width="32" height="14" rx="5" fill="#e8e8e8" stroke="#909090"/><rect x="9" y="14" width="18" height="5" fill="#40a0f0"/><rect x="8" y="24" width="20" height="6" fill="#fafafa" stroke="#a0a0a0"/></svg>
<svg class="r" style="left:711px;top:987px" width="36" height="32" viewBox="0 0 36 32"><path d="M4 8l8-6 22 18-8 6z" fill="#90c8f0" stroke="#5080b0"/><path d="M22 16l12 10-6 5-12-10z" fill="#c0c0c0" stroke="#707070"/><path d="M28 30l6-6v6z" fill="#60c040"/></svg>
<svg class="r" style="left:756px;top:986px" width="36" height="34" viewBox="0 0 36 34"><g transform="rotate(-45 18 17)"><rect x="6" y="5" width="24" height="24" rx="2" fill="#202020"/><rect x="10" y="5" width="14" height="8" fill="#909090"/><rect x="10" y="17" width="16" height="12" fill="#f0f0f0"/></g></svg>
<svg class="r" style="left:812px;top:993px" width="8" height="14" viewBox="0 0 8 14"><path d="M7 0v14L0 7z" fill="#606060"/></svg>
<div class="r" style="left:827px;top:980px;width:1px;height:42px;background:#c8c8c8"></div>
<svg class="r" style="left:832px;top:990px" width="22" height="17" viewBox="0 0 22 17"><rect x="0" y="0" width="7" height="16" fill="#203890"/><rect x="7" y="0" width="7" height="16" fill="#f0f0f0"/><rect x="14" y="0" width="7" height="16" fill="#d02020"/><text x="4" y="13" font-size="12" font-weight="bold" fill="#000" font-family="Liberation Serif">fr</text></svg>
<svg class="r" style="left:857px;top:989px" width="22" height="22" viewBox="0 0 22 22"><rect x="5" y="3" width="13" height="14" rx="2" fill="#2040a0"/><circle cx="7" cy="16" r="5" fill="#d01010"/></svg>
<svg class="r" style="left:880px;top:989px" width="22" height="20" viewBox="0 0 22 20"><rect x="1" y="1" width="20" height="18" rx="2" fill="#4a80c8"/><rect x="4" y="4" width="14" height="12" fill="#fff"/><text x="7" y="15" font-size="12" font-weight="bold" font-family="Liberation Serif" fill="#000">1</text></svg>
<svg class="r" style="left:904px;top:989px" width="22" height="22" viewBox="0 0 22 22"><path d="M4 4l14 14M18 4L4 18" stroke="#4080d0" stroke-width="2"/><circle cx="4" cy="4" r="3" fill="#f08040"/><circle cx="18" cy="18" r="3" fill="#40a0e0"/><circle cx="4" cy="18" r="3" fill="#60c060"/><circle cx="18" cy="4" r="3" fill="#e06040"/></svg>
<svg class="r" style="left:928px;top:988px" width="20" height="22" viewBox="0 0 20 22"><rect x="2" y="3" width="16" height="18" rx="2" fill="#f8e0a0" stroke="#c09040"/><text x="6" y="17" font-size="12" font-family="Liberation Sans" fill="#806030">k</text></svg>
<svg class="r" style="left:959px;top:979px" width="32" height="30" viewBox="0 0 32 30"><circle cx="16" cy="15" r="9" fill="#f8b000"/><circle cx="16" cy="15" r="12" fill="none" stroke="#f06000" stroke-width="3" stroke-dasharray="2 2"/><circle cx="14" cy="12" r="4" fill="#ffe060"/></svg>
<div class="t" style="left:963px;top:1009.84px;font-size:12px;line-height:14px;letter-spacing:0.4px;color:#000;font-weight:normal;font-family:'Liberation Sans',sans-serif;">17°C</div>
<svg class="r" style="left:1008px;top:979px" width="48" height="18" viewBox="0 0 48 18"><path transform="translate(1 0)" d="M1 1H8V16H1Z" stroke="#101010" stroke-width="2.2" fill="none"/><path transform="translate(11 0)" d="M0 1H8M7.5 0V17" stroke="#101010" stroke-width="2.2" fill="none"/><rect x="25" y="4" width="2.5" height="2.5" fill="#101010"/><rect x="25" y="12" width="2.5" height="2.5" fill="#101010"/><path transform="translate(29 0)" d="M1 0V9M0 8.5H9M7.5 0V17" stroke="#101010" stroke-width="2.2" fill="none"/><path transform="translate(39 0)" d="M0 1H8M2 8.5H8M0 16H8M7.5 0V17" stroke="#101010" stroke-width="2.2" fill="none"/></svg>
<div class="t" style="left:1022px;top:997.69px;font-size:11px;line-height:13px;letter-spacing:0.1px;color:#000;font-weight:normal;font-family:'Liberation Sans',sans-serif;">jeudi</div>
<div class="t" style="left:1007px;top:1010.02px;font-size:11.5px;line-height:14px;letter-spacing:-0.35px;color:#000;font-weight:normal;font-family:'Liberation Sans',sans-serif;">31/07/2008</div>
<div class="r" style="left:1074px;top:979px;width:20px;height:22px;background:linear-gradient(#6aaaf0,#2a6ac8);border:1px solid #a0a0a0;border-radius:3px"></div>
<svg class="r" style="left:1078px;top:983px" width="12" height="14" viewBox="0 0 12 14"><path d="M3 6V3q3-3 6 0v3" stroke="#fff" stroke-width="1.5" fill="none"/><rect x="2" y="6" width="8" height="6" fill="none" stroke="#fff" stroke-width="1.5"/></svg>
<div class="r" style="left:1074px;top:1002px;width:20px;height:22px;background:linear-gradient(#f05050,#c01818);border:1px solid #a0a0a0;border-radius:3px"></div>
<svg class="r" style="left:1077px;top:1006px" width="14" height="14" viewBox="0 0 14 14"><circle cx="7" cy="7" r="5" fill="none" stroke="#fff" stroke-width="2"/><path d="M7 2v5" stroke="#fff" stroke-width="2"/></svg>
<svg class="r" style="left:1099px;top:994px" width="6" height="10" viewBox="0 0 6 10"><path d="M0 0v10l6-5z" fill="#606060"/></svg>
</body></html>
